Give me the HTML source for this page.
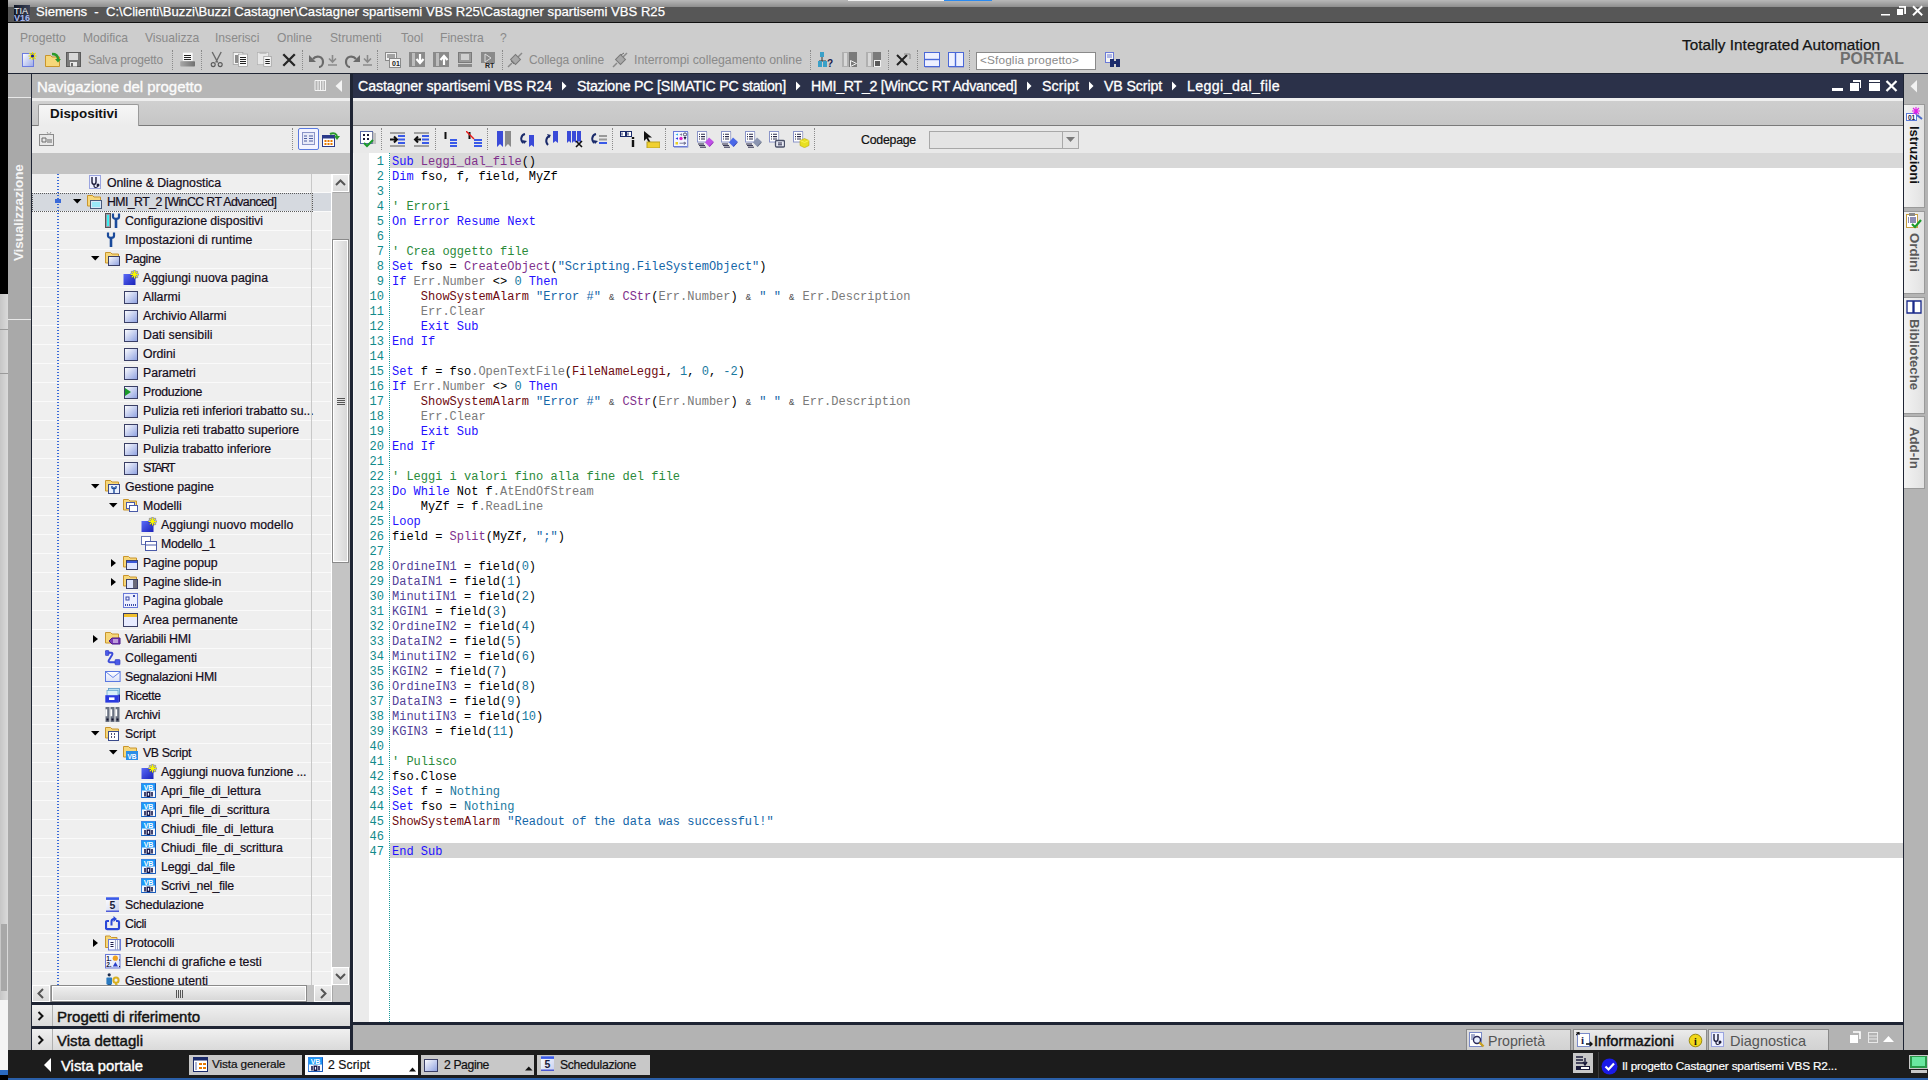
<!DOCTYPE html>
<html><head><meta charset="utf-8">
<style>
*{margin:0;padding:0;box-sizing:border-box}
html,body{width:1928px;height:1080px;overflow:hidden;background:#000;font-family:"Liberation Sans",sans-serif;font-size:12px;color:#000;position:relative}
.a{position:absolute}
.t{position:absolute;white-space:pre;line-height:1}
.cl{position:absolute;left:392px;height:15px;white-space:pre;font-family:"Liberation Mono",monospace;font-size:12px;line-height:15px;color:#000}
.ln{position:absolute;left:359px;width:25px;text-align:right;height:15px;font-family:"Liberation Mono",monospace;font-size:12px;line-height:15px;color:#118a8a}
.k{color:#2410ff}.p{color:#80308c}.c{color:#2a8a3a}.s{color:#1466a8}.g{color:#7a7a7a}.m{color:#6e0a10}.n{color:#1a7aa0}.v{color:#523f98}
.amp{display:inline-block;width:7.2px;text-align:center;font-size:9px;color:#444;vertical-align:top;line-height:16px}
.tr{position:absolute;font-size:12.3px;color:#140c1a;white-space:pre;line-height:1;-webkit-text-stroke:0.2px #140c1a}
</style></head><body>
<div class="a" style="left:0px;top:0px;width:8px;height:294px;background:#000;"></div>
<div class="a" style="left:0px;top:294px;width:8px;height:776px;background:linear-gradient(90deg,#c6c6c6,#dadada);"></div>
<div class="a" style="left:0px;top:329px;width:8px;height:1px;background:#9a9a9a;"></div>
<div class="a" style="left:0px;top:373px;width:8px;height:1px;background:#9a9a9a;"></div>
<div class="a" style="left:1px;top:924px;width:6px;height:67px;background:#a8a8a8;"></div>
<div class="a" style="left:0px;top:1000px;width:8px;height:70px;background:#f4f4f4;"></div>
<div class="a" style="left:0px;top:1070px;width:8px;height:5px;background:#2a6ac0;"></div>
<div class="a" style="left:0px;top:1075px;width:8px;height:5px;background:#000;"></div>
<div class="a" style="left:8px;top:0px;width:1920px;height:7px;background:linear-gradient(#b8b8b8,#8e8e8e);"></div>
<div class="a" style="left:848px;top:0px;width:96px;height:1px;background:#f2f2f2;"></div>
<div class="a" style="left:944px;top:0px;width:48px;height:1px;background:#2a8af0;"></div>
<div class="a" style="left:8px;top:7px;width:1920px;height:15px;background:#575757;"></div>
<div class="a" style="left:8px;top:22px;width:1920px;height:1px;background:#101010;"></div>
<svg class="a" style="left:14px;top:5px;" width="16" height="16" viewBox="0 0 16 16"><defs><linearGradient id="tl" x1="0" y1="0" x2="1" y2="0"><stop offset="0" stop-color="#121828"/><stop offset="1" stop-color="#3a4258"/></linearGradient></defs><rect width="16" height="16" fill="url(#tl)"/><text x="0" y="8.6" font-size="8.6" font-family="Liberation Sans" fill="#f4f4f4" textLength="14" lengthAdjust="spacingAndGlyphs">TIA</text><text x="0" y="15.9" font-size="8.4" font-weight="700" font-family="Liberation Sans" fill="#a8b8f0" textLength="16" lengthAdjust="spacingAndGlyphs">V16</text></svg>
<div class="t" style="left:36px;top:5px;font-size:13.1px;color:#fff;font-weight:400;font-family:'Liberation Sans',sans-serif;letter-spacing:0.009px;-webkit-text-stroke:0.25px #fff;">Siemens  -  C:\Clienti\Buzzi\Buzzi Castagner\Castagner spartisemi VBS R25\Castagner spartisemi VBS R25</div>
<svg class="a" style="left:1880px;top:4px;" width="48" height="14" viewBox="0 0 48 14"><rect x="1" y="10" width="9" height="1.5" fill="#fff"/><path d="M19 2.8h6.1v7.2" stroke="#fff" stroke-width="1.8" fill="none"/><rect x="16.5" y="4.5" width="7" height="7" fill="#fff" stroke="#575757"/><path d="M33 2.3l9.2 9M42.2 2.3l-9.2 9" stroke="#fff" stroke-width="1.9"/></svg>
<div class="a" style="left:8px;top:23px;width:1920px;height:50px;background:#cdcdcd;"></div>
<div class="a" style="left:8px;top:73px;width:1920px;height:1px;background:#1e2433;"></div>
<div class="t" style="left:20px;top:32px;font-size:12.1px;color:#8a8a8a;font-weight:400;font-family:'Liberation Sans',sans-serif;">Progetto</div>
<div class="t" style="left:83px;top:32px;font-size:12.1px;color:#8a8a8a;font-weight:400;font-family:'Liberation Sans',sans-serif;">Modifica</div>
<div class="t" style="left:145px;top:32px;font-size:12.1px;color:#8a8a8a;font-weight:400;font-family:'Liberation Sans',sans-serif;">Visualizza</div>
<div class="t" style="left:215px;top:32px;font-size:12.1px;color:#8a8a8a;font-weight:400;font-family:'Liberation Sans',sans-serif;">Inserisci</div>
<div class="t" style="left:277px;top:32px;font-size:12.1px;color:#8a8a8a;font-weight:400;font-family:'Liberation Sans',sans-serif;">Online</div>
<div class="t" style="left:330px;top:32px;font-size:12.1px;color:#8a8a8a;font-weight:400;font-family:'Liberation Sans',sans-serif;">Strumenti</div>
<div class="t" style="left:401px;top:32px;font-size:12.1px;color:#8a8a8a;font-weight:400;font-family:'Liberation Sans',sans-serif;">Tool</div>
<div class="t" style="left:440px;top:32px;font-size:12.1px;color:#8a8a8a;font-weight:400;font-family:'Liberation Sans',sans-serif;">Finestra</div>
<div class="t" style="left:500px;top:32px;font-size:12.1px;color:#8a8a8a;font-weight:400;font-family:'Liberation Sans',sans-serif;">?</div>
<svg class="a" style="left:22px;top:52px;" width="15" height="15" viewBox="0 0 15 15"><defs><linearGradient id="np" x1="0" y1="0" x2="1" y2="1"><stop offset="0" stop-color="#fff"/><stop offset="1" stop-color="#9aa8e8"/></linearGradient></defs><rect x="0.5" y="1.5" width="11" height="13" fill="url(#np)" stroke="#6b7be0"/><path d="M10.5 0v8M6.5 4h8M7.5 1l6 6M13.5 1l-6 6" stroke="#e8e000" stroke-width="1.2"/><circle cx="10.5" cy="4" r="1.6" fill="#1a1aa0"/></svg>
<svg class="a" style="left:45px;top:52px;" width="16" height="15" viewBox="0 0 16 15"><path d="M0.5 3.5h5l1.5 1.5h7.5v9.5h-14z" fill="#f6d77a" stroke="#c9952c"/><path d="M7 2c4 0 6 1.5 6 5" stroke="#2a9a2a" stroke-width="2.4" fill="none"/><path d="M10 7h6l-3 3.5z" fill="#2a9a2a"/></svg>
<svg class="a" style="left:66px;top:52px;" width="15" height="15" viewBox="0 0 15 15"><rect x="0.5" y="0.5" width="14" height="14" fill="#7a7a7a" stroke="#5a5a5a"/><rect x="3" y="1" width="9" height="7" fill="#d8d8d8"/><rect x="4" y="10" width="7" height="4.5" fill="#e8e8e8"/><rect x="5" y="11" width="2" height="3.5" fill="#6a6a6a"/></svg>
<div class="t" style="left:88px;top:54px;font-size:12px;color:#8a8a8a;font-weight:400;font-family:'Liberation Sans',sans-serif;letter-spacing:-0.171px;">Salva progetto</div>
<div class="a" style="left:172px;top:50px;width:1px;height:20px;border-left:1px dotted #8a8a8a"></div>
<svg class="a" style="left:180px;top:51px;" width="16" height="17" viewBox="0 0 16 17"><defs><linearGradient id="pr" x1="0" y1="0" x2="1" y2="0"><stop offset="0" stop-color="#a8a8a8"/><stop offset="1" stop-color="#707070"/></linearGradient></defs><rect x="2.5" y="1.2" width="10.5" height="9" fill="#f8f8f8" stroke="#c8c8c8" stroke-width="0.6"/><path d="M4 4.5h7M4 6.5h7M4 8.5h7" stroke="#222" stroke-width="1"/><rect x="0.2" y="10.2" width="14.8" height="5.4" rx="0.8" fill="url(#pr)"/></svg>
<div class="a" style="left:201px;top:50px;width:1px;height:20px;border-left:1px dotted #8a8a8a"></div>
<svg class="a" style="left:210px;top:51px;" width="14" height="17" viewBox="0 0 14 17"><path d="M2.2 1l5.5 10.5M11.2 1L5.7 11.5" stroke="#6a6a6a" stroke-width="1.4"/><circle cx="3.2" cy="13.6" r="2" fill="none" stroke="#5a5a5a" stroke-width="1.1"/><circle cx="10.2" cy="13.6" r="2" fill="none" stroke="#5a5a5a" stroke-width="1.1"/></svg>
<svg class="a" style="left:232px;top:51px;" width="17" height="17" viewBox="0 0 17 17"><rect x="1.2" y="1.5" width="9.7" height="11.9" fill="#f4f4f4" stroke="#9a9a9a" stroke-width="0.7"/><path d="M3 5h3M3 7h3M3 9h3M3 11h3" stroke="#222"/><rect x="6.4" y="3.1" width="9" height="12.5" fill="#f8f8f8" stroke="#9a9a9a" stroke-width="0.7"/><path d="M8 6.5h6M8 8.5h6M8 10.5h6M8 12.5h6" stroke="#222"/></svg>
<svg class="a" style="left:257px;top:51px;" width="16" height="17" viewBox="0 0 16 17"><rect x="0.3" y="1.5" width="11.3" height="12.2" fill="#e8e8e8" stroke="#b0b0b0" stroke-width="0.7"/><rect x="2.5" y="0.8" width="7" height="2" fill="#b8b8b8"/><rect x="6.8" y="5.4" width="7.4" height="10.2" fill="#f8f8f8" stroke="#9a9a9a" stroke-width="0.7"/><path d="M8.3 8.5h4.5M8.3 10.5h4.5M8.3 12.5h4.5" stroke="#222"/></svg>
<svg class="a" style="left:282px;top:53px;" width="14" height="14" viewBox="0 0 14 14"><path d="M1.3 1.3l11.5 11.5M12.8 1.3L1.3 12.8" stroke="#262626" stroke-width="2.3"/></svg>
<div class="a" style="left:302px;top:50px;width:1px;height:20px;border-left:1px dotted #8a8a8a"></div>
<svg class="a" style="left:309px;top:52px;" width="16" height="16" viewBox="0 0 16 16"><path d="M4 7c3-4 10-3 10 3c0 3-2 5-4 5" stroke="#6a6a6a" stroke-width="2.2" fill="none"/><path d="M0 3v7h7z" fill="#6a6a6a"/></svg>
<svg class="a" style="left:328px;top:55px;" width="9" height="11" viewBox="0 0 9 11"><path d="M4.5 0v6M1 3.5l3.5 3.5 3.5-3.5M0 10h9" stroke="#8a8a8a" stroke-width="1.6" fill="none"/></svg>
<svg class="a" style="left:344px;top:52px;" width="16" height="16" viewBox="0 0 16 16"><path d="M12 7c-3-4-10-3-10 3c0 3 2 5 4 5" stroke="#6a6a6a" stroke-width="2.2" fill="none"/><path d="M16 3v7H9z" fill="#6a6a6a"/></svg>
<svg class="a" style="left:363px;top:55px;" width="9" height="11" viewBox="0 0 9 11"><path d="M4.5 0v6M1 3.5l3.5 3.5 3.5-3.5M0 10h9" stroke="#8a8a8a" stroke-width="1.6" fill="none"/></svg>
<div class="a" style="left:377px;top:50px;width:1px;height:20px;border-left:1px dotted #8a8a8a"></div>
<svg class="a" style="left:385px;top:52px;" width="16" height="16" viewBox="0 0 16 16"><rect x="0.5" y="0.5" width="11" height="8" fill="#f0f0f0" stroke="#8a8a8a"/><path d="M2 3h8M2 5h8" stroke="#555"/><rect x="4.5" y="6.5" width="11" height="9" fill="#f4f4f4" stroke="#8a8a8a"/><text x="7" y="14" font-size="7" font-weight="700" font-family="Liberation Sans" fill="#222">01</text></svg>
<svg class="a" style="left:409px;top:52px;" width="16" height="16" viewBox="0 0 16 16"><rect x="0" y="0" width="16" height="15" fill="#8a8a8a"/><rect x="3" y="1" width="3" height="13" fill="#bdbdbd"/><path d="M11 2v8M7.5 7l3.5 4 3.5-4" stroke="#fff" stroke-width="2.2" fill="none"/></svg>
<svg class="a" style="left:433px;top:52px;" width="16" height="16" viewBox="0 0 16 16"><rect x="0" y="0" width="16" height="15" fill="#8a8a8a"/><rect x="3" y="1" width="3" height="13" fill="#bdbdbd"/><path d="M11 13V5M7.5 8l3.5-4 3.5 4" stroke="#fff" stroke-width="2.2" fill="none"/></svg>
<svg class="a" style="left:458px;top:52px;" width="14" height="16" viewBox="0 0 14 16"><rect x="0.5" y="0.5" width="13" height="10" fill="#9a9a9a" stroke="#7a7a7a"/><rect x="3" y="2" width="8" height="6" fill="#d0d0d0"/><rect x="0" y="12" width="14" height="3" fill="#8a8a8a"/></svg>
<svg class="a" style="left:481px;top:52px;" width="16" height="16" viewBox="0 0 16 16"><rect x="0" y="0" width="14" height="11" fill="#8a8a8a"/><path d="M4 2l6 4-6 4z" fill="none" stroke="#ddd"/><text x="4" y="15.5" font-size="7" font-weight="700" font-family="Liberation Sans" fill="#222">RT</text></svg>
<div class="a" style="left:502px;top:50px;width:1px;height:20px;border-left:1px dotted #8a8a8a"></div>
<svg class="a" style="left:507px;top:52px;" width="16" height="16" viewBox="0 0 16 16"><path d="M1 15l4-4M11 5l4-4" stroke="#8a8a8a" stroke-width="1.5"/><path d="M4 9l3-3 3 3-3 3z" fill="#9a9a9a" stroke="#7a7a7a"/><rect x="5" y="4" width="7" height="7" transform="rotate(45 8.5 7.5)" fill="#a8a8a8" stroke="#7a7a7a"/></svg>
<div class="t" style="left:529px;top:54px;font-size:12px;color:#8a8a8a;font-weight:400;font-family:'Liberation Sans',sans-serif;letter-spacing:-0.076px;">Collega online</div>
<svg class="a" style="left:612px;top:52px;" width="16" height="16" viewBox="0 0 16 16"><path d="M1 15l4-4M11 5l4-4" stroke="#8a8a8a" stroke-width="1.5"/><rect x="5" y="4" width="7" height="7" transform="rotate(45 8.5 7.5)" fill="#a8a8a8" stroke="#7a7a7a"/><path d="M9 3l3-2" stroke="#6a6a6a"/></svg>
<div class="t" style="left:634px;top:54px;font-size:12.3px;color:#8a8a8a;font-weight:400;font-family:'Liberation Sans',sans-serif;letter-spacing:-0.005px;">Interrompi collegamento online</div>
<div class="a" style="left:810px;top:50px;width:1px;height:20px;border-left:1px dotted #8a8a8a"></div>
<svg class="a" style="left:818px;top:52px;" width="16" height="16" viewBox="0 0 16 16"><rect x="2" y="0" width="4" height="5" fill="#3aa0c8"/><path d="M4 5v4M1 9h7" stroke="#333"/><rect x="0" y="9" width="4" height="6" fill="#3aa0c8"/><rect x="5" y="9" width="4" height="6" fill="#3aa0c8"/><text x="9" y="15" font-size="10" font-weight="700" font-family="Liberation Sans" fill="#1a1a4a">?</text></svg>
<svg class="a" style="left:842px;top:52px;" width="16" height="16" viewBox="0 0 16 16"><rect x="0" y="0" width="7" height="15" fill="#b0b0b0"/><rect x="2" y="1" width="3" height="13" fill="#d8d8d8"/><rect x="7" y="0" width="8" height="15" fill="#7a7a7a"/><path d="M8.5 8.5l6 3-6 3z" fill="none" stroke="#f0f0f0"/></svg>
<svg class="a" style="left:866px;top:52px;" width="16" height="16" viewBox="0 0 16 16"><rect x="0" y="0" width="7" height="15" fill="#b0b0b0"/><rect x="2" y="1" width="3" height="13" fill="#d8d8d8"/><rect x="7" y="0" width="8" height="15" fill="#7a7a7a"/><rect x="8.5" y="8.5" width="6" height="6" fill="#5a5a5a" stroke="#f0f0f0"/></svg>
<div class="a" style="left:888px;top:50px;width:1px;height:20px;border-left:1px dotted #8a8a8a"></div>
<svg class="a" style="left:895px;top:52px;" width="16" height="15" viewBox="0 0 16 15"><path d="M2 3l10 10M12 3L2 13" stroke="#222" stroke-width="2"/><path d="M9 2h6v5" stroke="#8a8a8a" fill="none"/></svg>
<div class="a" style="left:917px;top:50px;width:1px;height:20px;border-left:1px dotted #8a8a8a"></div>
<svg class="a" style="left:924px;top:52px;" width="16" height="16" viewBox="0 0 16 16"><rect x="0.5" y="0.5" width="15" height="14" fill="#eef0ff" stroke="#4a68d8"/><path d="M1 7.5h14" stroke="#4a68d8" stroke-width="1.4"/><path d="M1 15.5h15" stroke="#a8a8c8"/></svg>
<svg class="a" style="left:948px;top:52px;" width="16" height="16" viewBox="0 0 16 16"><rect x="0.5" y="0.5" width="15" height="14" fill="#eef0ff" stroke="#4a68d8"/><path d="M7.5 1v14" stroke="#4a68d8" stroke-width="1.4"/><path d="M1 15.5h15" stroke="#a8a8c8"/></svg>
<div class="a" style="left:969px;top:50px;width:1px;height:20px;border-left:1px dotted #8a8a8a"></div>
<div class="a" style="left:976px;top:52px;width:120px;height:18px;background:#fff;border:1px solid #8a8a8a"></div>
<div class="t" style="left:980px;top:55px;font-size:11.8px;color:#8a8a8a;font-weight:400;font-family:'Liberation Sans',sans-serif;letter-spacing:0.143px;">&lt;Sfoglia progetto&gt;</div>
<svg class="a" style="left:1105px;top:52px;" width="16" height="16" viewBox="0 0 16 16"><rect x="0.5" y="0.5" width="8" height="10" fill="#f4f4f4" stroke="#6a7ad8"/><path d="M2 3h5M2 5h5" stroke="#6a7ad8"/><rect x="5" y="7" width="4" height="8" fill="#1a2a6a"/><rect x="11" y="7" width="4" height="8" fill="#1a2a6a"/><rect x="8" y="9" width="4" height="3" fill="#1a2a6a"/></svg>
<div class="t" style="left:1682px;top:37px;font-size:15.3px;color:#141414;font-weight:400;font-family:'Liberation Sans',sans-serif;letter-spacing:0.024px;-webkit-text-stroke:0.25px #141414;">Totally Integrated Automation</div>
<div class="t" style="left:1840px;top:51px;font-size:15.8px;color:#6e6e6e;font-weight:700;font-family:'Liberation Sans',sans-serif;letter-spacing:0.036px;">PORTAL</div>
<div class="a" style="left:8px;top:74px;width:23px;height:976px;background:#a9a9a9;"></div>
<div class="a" style="left:8px;top:74px;width:23px;height:24px;background:#b2b2b2;"></div>
<div class="a" style="left:8px;top:97px;width:23px;height:1px;background:#e8e8e8;"></div>
<div class="a" style="left:8px;top:319px;width:23px;height:1px;background:#e8e8e8;"></div>
<div class="t" style="left:12px;top:261px;font-size:13.5px;font-weight:700;color:#f4f4f4;transform-origin:0 0;transform:rotate(-90deg);letter-spacing:-0.140px;">Visualizzazione</div>
<div class="a" style="left:31px;top:74px;width:1px;height:976px;background:#1e2433;"></div>
<div class="a" style="left:32px;top:74px;width:318px;height:24px;background:#b6b6b6;"></div>
<div class="t" style="left:37px;top:79px;font-size:15px;color:#fbfbfb;font-weight:400;font-family:'Liberation Sans',sans-serif;letter-spacing:-0.040px;-webkit-text-stroke:0.35px #fbfbfb;">Navigazione del progetto</div>
<svg class="a" style="left:314px;top:80px;" width="13" height="11" viewBox="0 0 13 11"><path d="M1 0.5v10M1 0.5h11M1 10.5h11M4 1v10M6.5 1v10M9 1v10M11.5 1v10" stroke="#f4f4f4" fill="none"/></svg>
<svg class="a" style="left:335px;top:80px;" width="8" height="12" viewBox="0 0 8 12"><path d="M7 0v12L0.5 6z" fill="#f4f4f4"/></svg>
<div class="a" style="left:32px;top:98px;width:318px;height:3px;background:#eeeeee;"></div>
<div class="a" style="left:32px;top:101px;width:318px;height:24px;background:linear-gradient(#d0d0d0,#c6c6c6);"></div>
<div class="a" style="left:32px;top:125px;width:318px;height:1px;background:#7a7a7a;"></div>
<div class="a" style="left:38px;top:104px;width:101px;height:22px;background:linear-gradient(#f6f6f6,#ececec);border:1px solid #9a9a9a;border-bottom:none;border-radius:2px 2px 0 0"></div>
<div class="t" style="left:50px;top:107px;font-size:13.4px;color:#111;font-weight:700;font-family:'Liberation Sans',sans-serif;">Dispositivi</div>
<div class="a" style="left:32px;top:126px;width:318px;height:27px;background:#ececec;"></div>
<svg class="a" style="left:39px;top:131px;" width="16" height="16" viewBox="0 0 16 16"><rect x="0.5" y="3.5" width="14" height="11" fill="#e8e8e8" stroke="#8a8a8a"/><path d="M3 7h4v4H3zM8 9h5M8 11h5" stroke="#6a6a6a" fill="none"/><path d="M8 1l2 3 2-3" stroke="#9a9a9a" fill="none"/></svg>
<div class="a" style="left:292px;top:128px;width:1px;height:22px;border-left:1px dotted #8a8a8a"></div>
<div class="a" style="left:298px;top:128px;width:21px;height:22px;background:#f4f4ff;border:1px solid #5a7ae0;border-radius:2px"></div>
<svg class="a" style="left:302px;top:132px;" width="13" height="14" viewBox="0 0 13 14"><rect x="0.5" y="0.5" width="12" height="12" fill="#e8eaf8" stroke="#8a94c8"/><path d="M2 4h3M7 4h4M2 6.5h3M7 6.5h4M2 9h3M7 9h4" stroke="#4a5aa0"/></svg>
<svg class="a" style="left:322px;top:131px;" width="18" height="16" viewBox="0 0 18 16"><rect x="0.5" y="4.5" width="12" height="11" fill="#fff" stroke="#2a3a8a"/><rect x="0.5" y="4.5" width="12" height="3" fill="#2a3a8a"/><path d="M2.5 9h2v2h-2zM5.5 9h2v2h-2zM8.5 9h2v2h-2zM2.5 12h2v2h-2zM5.5 12h2v2h-2zM8.5 12h2v2h-2z" fill="#e87a00"/><path d="M8 3c4-2 7 0 7 3" stroke="#2a9a2a" stroke-width="2" fill="none"/><path d="M12 5h6l-3 4z" fill="#2a9a2a"/></svg>
<div class="a" style="left:32px;top:153px;width:318px;height:21px;background:#c3c3c3;"></div>
<div class="a" style="left:32px;top:174px;width:300px;height:811px;background:#efefef;"></div>
<div class="a" style="left:332px;top:174px;width:18px;height:811px;background:#c4c4c4;"></div>
<div class="a" style="left:32px;top:192px;width:300px;height:1px;background:#fafafa;"></div>
<svg class="a" style="left:89px;top:175px;" width="13" height="15" viewBox="0 0 13 15"><rect x="0.5" y="0.5" width="11" height="13" fill="#eef0ff" stroke="#9aa4e0"/><path d="M3 2v5c0 3 4 3 4 0V2" stroke="#1a1a3a" stroke-width="1.4" fill="none"/><path d="M5 9v2c0 2 3 2 4 0" stroke="#1a1a3a" stroke-width="1.2" fill="none"/><circle cx="9" cy="10" r="1.5" fill="#1a1a3a"/></svg>
<div class="tr" style="left:107px;top:177px;letter-spacing:-0.042px;">Online &amp; Diagnostica</div>
<div class="a" style="left:32px;top:193px;width:299px;height:19px;background:#d5d9df;"></div>
<div class="a" style="left:311px;top:193px;width:20px;height:18px;background:#d5d9df;"></div>
<div class="a" style="left:32px;top:211px;width:300px;height:1px;background:#fafafa;"></div>
<div class="a" style="left:32px;top:193px;width:281px;height:19px;border:1px dotted #5a5a5a"></div>
<div class="a" style="left:55px;top:199px;width:6px;height:4px;background:#3a6ad8;"></div>
<svg class="a" style="left:73px;top:199px;" width="9" height="6" viewBox="0 0 9 6"><path d="M0 0h8.5L4.25 4.6z" fill="#000"/></svg>
<svg class="a" style="left:87px;top:194px;" width="16" height="16" viewBox="0 0 16 16"><path d="M0.5 1.5h5l1.5 1.5h6.5v9h-13z" fill="#f6d77a" stroke="#c9952c"/><rect x="3.5" y="6.5" width="11" height="8" fill="#d8e8f8" stroke="#4a5a7a"/><rect x="5" y="8" width="8" height="5" fill="#9ae8f8"/></svg>
<div class="tr" style="left:107px;top:196px;letter-spacing:-0.565px;">HMI_RT_2 [WinCC RT Advanced]</div>
<div class="a" style="left:32px;top:230px;width:300px;height:1px;background:#fafafa;"></div>
<svg class="a" style="left:105px;top:213px;" width="16" height="16" viewBox="0 0 16 16"><rect x="0.5" y="0.5" width="5" height="14" fill="#9a9aa8" stroke="#555"/><rect x="2" y="2" width="2" height="11" fill="#3af0f0"/><path d="M11 6v9" stroke="#1a4a9a" stroke-width="2.6"/><path d="M8 0.5v3.5c0 2.5 6 2.5 6 0V0.5" stroke="#1a4a9a" stroke-width="2.2" fill="none"/></svg>
<div class="tr" style="left:125px;top:215px;letter-spacing:-0.056px;">Configurazione dispositivi</div>
<div class="a" style="left:32px;top:249px;width:300px;height:1px;background:#fafafa;"></div>
<svg class="a" style="left:105px;top:232px;" width="16" height="16" viewBox="0 0 16 16"><path d="M6 6v9" stroke="#1a4a9a" stroke-width="2.6"/><path d="M3 0.5v3.5c0 2.5 6 2.5 6 0V0.5" stroke="#1a4a9a" stroke-width="2.2" fill="none"/></svg>
<div class="tr" style="left:125px;top:234px;letter-spacing:0.046px;">Impostazioni di runtime</div>
<div class="a" style="left:32px;top:268px;width:300px;height:1px;background:#fafafa;"></div>
<svg class="a" style="left:91px;top:256px;" width="9" height="6" viewBox="0 0 9 6"><path d="M0 0h8.5L4.25 4.6z" fill="#000"/></svg>
<svg class="a" style="left:105px;top:251px;" width="16" height="16" viewBox="0 0 16 16"><path d="M0.5 1.5h5l1.5 1.5h6.5v9h-13z" fill="#f6d77a" stroke="#c9952c"/><defs><linearGradient id="fp" x1="0" y1="0" x2="1" y2="1"><stop offset="0" stop-color="#fff"/><stop offset="1" stop-color="#8c9fe0"/></linearGradient></defs><rect x="3.5" y="5.5" width="11" height="9" fill="url(#fp)" stroke="#3a3f66"/></svg>
<div class="tr" style="left:125px;top:253px;letter-spacing:-0.433px;">Pagine</div>
<div class="a" style="left:32px;top:287px;width:300px;height:1px;background:#fafafa;"></div>
<svg class="a" style="left:123px;top:270px;" width="16" height="16" viewBox="0 0 16 16"><defs><linearGradient id="ad" x1="0" y1="0" x2="1" y2="1"><stop offset="0" stop-color="#5a6af8"/><stop offset="1" stop-color="#1a22b8"/></linearGradient></defs><rect x="0.5" y="4" width="12" height="11" fill="url(#ad)"/><path d="M11.5 0v9M7 4.5h9M8.3 1.3l6.4 6.4M14.7 1.3l-6.4 6.4" stroke="#20208a" stroke-width="2.2" stroke-opacity="0.55"/><path d="M11.5 0.5v8M7.5 4.5h8M8.7 1.7l5.6 5.6M14.3 1.7l-5.6 5.6" stroke="#f8f800" stroke-width="1.2"/></svg>
<div class="tr" style="left:143px;top:272px;letter-spacing:-0.006px;">Aggiungi nuova pagina</div>
<div class="a" style="left:32px;top:306px;width:300px;height:1px;background:#fafafa;"></div>
<svg class="a" style="left:123px;top:289px;" width="16" height="16" viewBox="0 0 16 16"><defs><linearGradient id="pg" x1="0" y1="0" x2="1" y2="1"><stop offset="0" stop-color="#fff"/><stop offset="1" stop-color="#8c9fe0"/></linearGradient></defs><rect x="1.5" y="2.5" width="13" height="12" fill="url(#pg)" stroke="#3a3f66"/></svg>
<div class="tr" style="left:143px;top:291px;letter-spacing:-0.025px;">Allarmi</div>
<div class="a" style="left:32px;top:325px;width:300px;height:1px;background:#fafafa;"></div>
<svg class="a" style="left:123px;top:308px;" width="16" height="16" viewBox="0 0 16 16"><defs><linearGradient id="pg" x1="0" y1="0" x2="1" y2="1"><stop offset="0" stop-color="#fff"/><stop offset="1" stop-color="#8c9fe0"/></linearGradient></defs><rect x="1.5" y="2.5" width="13" height="12" fill="url(#pg)" stroke="#3a3f66"/></svg>
<div class="tr" style="left:143px;top:310px;letter-spacing:-0.035px;">Archivio Allarmi</div>
<div class="a" style="left:32px;top:344px;width:300px;height:1px;background:#fafafa;"></div>
<svg class="a" style="left:123px;top:327px;" width="16" height="16" viewBox="0 0 16 16"><defs><linearGradient id="pg" x1="0" y1="0" x2="1" y2="1"><stop offset="0" stop-color="#fff"/><stop offset="1" stop-color="#8c9fe0"/></linearGradient></defs><rect x="1.5" y="2.5" width="13" height="12" fill="url(#pg)" stroke="#3a3f66"/></svg>
<div class="tr" style="left:143px;top:329px;letter-spacing:0.033px;">Dati sensibili</div>
<div class="a" style="left:32px;top:363px;width:300px;height:1px;background:#fafafa;"></div>
<svg class="a" style="left:123px;top:346px;" width="16" height="16" viewBox="0 0 16 16"><defs><linearGradient id="pg" x1="0" y1="0" x2="1" y2="1"><stop offset="0" stop-color="#fff"/><stop offset="1" stop-color="#8c9fe0"/></linearGradient></defs><rect x="1.5" y="2.5" width="13" height="12" fill="url(#pg)" stroke="#3a3f66"/></svg>
<div class="tr" style="left:143px;top:348px;letter-spacing:-0.052px;">Ordini</div>
<div class="a" style="left:32px;top:382px;width:300px;height:1px;background:#fafafa;"></div>
<svg class="a" style="left:123px;top:365px;" width="16" height="16" viewBox="0 0 16 16"><defs><linearGradient id="pg" x1="0" y1="0" x2="1" y2="1"><stop offset="0" stop-color="#fff"/><stop offset="1" stop-color="#8c9fe0"/></linearGradient></defs><rect x="1.5" y="2.5" width="13" height="12" fill="url(#pg)" stroke="#3a3f66"/></svg>
<div class="tr" style="left:143px;top:367px;letter-spacing:-0.068px;">Parametri</div>
<div class="a" style="left:32px;top:401px;width:300px;height:1px;background:#fafafa;"></div>
<svg class="a" style="left:123px;top:384px;" width="16" height="16" viewBox="0 0 16 16"><defs><linearGradient id="pg" x1="0" y1="0" x2="1" y2="1"><stop offset="0" stop-color="#fff"/><stop offset="1" stop-color="#8c9fe0"/></linearGradient></defs><rect x="1.5" y="2.5" width="13" height="12" fill="url(#pg)" stroke="#3a3f66"/><path d="M2 4l6 4-6 4z" fill="#1a9a2a"/></svg>
<div class="tr" style="left:143px;top:386px;letter-spacing:-0.322px;">Produzione</div>
<div class="a" style="left:32px;top:420px;width:300px;height:1px;background:#fafafa;"></div>
<svg class="a" style="left:123px;top:403px;" width="16" height="16" viewBox="0 0 16 16"><defs><linearGradient id="pg" x1="0" y1="0" x2="1" y2="1"><stop offset="0" stop-color="#fff"/><stop offset="1" stop-color="#8c9fe0"/></linearGradient></defs><rect x="1.5" y="2.5" width="13" height="12" fill="url(#pg)" stroke="#3a3f66"/></svg>
<div class="tr" style="left:143px;top:405px;letter-spacing:-0.044px;">Pulizia reti inferiori trabatto su...</div>
<div class="a" style="left:32px;top:439px;width:300px;height:1px;background:#fafafa;"></div>
<svg class="a" style="left:123px;top:422px;" width="16" height="16" viewBox="0 0 16 16"><defs><linearGradient id="pg" x1="0" y1="0" x2="1" y2="1"><stop offset="0" stop-color="#fff"/><stop offset="1" stop-color="#8c9fe0"/></linearGradient></defs><rect x="1.5" y="2.5" width="13" height="12" fill="url(#pg)" stroke="#3a3f66"/></svg>
<div class="tr" style="left:143px;top:424px;letter-spacing:-0.011px;">Pulizia reti trabatto superiore</div>
<div class="a" style="left:32px;top:458px;width:300px;height:1px;background:#fafafa;"></div>
<svg class="a" style="left:123px;top:441px;" width="16" height="16" viewBox="0 0 16 16"><defs><linearGradient id="pg" x1="0" y1="0" x2="1" y2="1"><stop offset="0" stop-color="#fff"/><stop offset="1" stop-color="#8c9fe0"/></linearGradient></defs><rect x="1.5" y="2.5" width="13" height="12" fill="url(#pg)" stroke="#3a3f66"/></svg>
<div class="tr" style="left:143px;top:443px;letter-spacing:-0.046px;">Pulizia trabatto inferiore</div>
<div class="a" style="left:32px;top:477px;width:300px;height:1px;background:#fafafa;"></div>
<svg class="a" style="left:123px;top:460px;" width="16" height="16" viewBox="0 0 16 16"><defs><linearGradient id="pg" x1="0" y1="0" x2="1" y2="1"><stop offset="0" stop-color="#fff"/><stop offset="1" stop-color="#8c9fe0"/></linearGradient></defs><rect x="1.5" y="2.5" width="13" height="12" fill="url(#pg)" stroke="#3a3f66"/></svg>
<div class="tr" style="left:143px;top:462px;letter-spacing:-1.677px;">START</div>
<div class="a" style="left:32px;top:496px;width:300px;height:1px;background:#fafafa;"></div>
<svg class="a" style="left:91px;top:484px;" width="9" height="6" viewBox="0 0 9 6"><path d="M0 0h8.5L4.25 4.6z" fill="#000"/></svg>
<svg class="a" style="left:105px;top:479px;" width="16" height="16" viewBox="0 0 16 16"><path d="M0.5 1.5h5l1.5 1.5h6.5v9h-13z" fill="#f6d77a" stroke="#c9952c"/><rect x="3.5" y="5.5" width="11" height="9" fill="#e8f0ff" stroke="#3a4a8a"/><path d="M9 8v6M7 7v2c0 1 4 1 4 0V7" stroke="#1a4a9a" stroke-width="1.4" fill="none"/></svg>
<div class="tr" style="left:125px;top:481px;letter-spacing:-0.051px;">Gestione pagine</div>
<div class="a" style="left:32px;top:515px;width:300px;height:1px;background:#fafafa;"></div>
<svg class="a" style="left:109px;top:503px;" width="9" height="6" viewBox="0 0 9 6"><path d="M0 0h8.5L4.25 4.6z" fill="#000"/></svg>
<svg class="a" style="left:123px;top:498px;" width="16" height="16" viewBox="0 0 16 16"><path d="M0.5 1.5h5l1.5 1.5h6.5v9h-13z" fill="#f6d77a" stroke="#c9952c"/><rect x="3.5" y="4.5" width="8" height="6" fill="#fff" stroke="#4a5aa8"/><rect x="6.5" y="7.5" width="8" height="6" fill="#fff" stroke="#4a5aa8"/></svg>
<div class="tr" style="left:143px;top:500px;letter-spacing:-0.038px;">Modelli</div>
<div class="a" style="left:32px;top:534px;width:300px;height:1px;background:#fafafa;"></div>
<svg class="a" style="left:141px;top:517px;" width="16" height="16" viewBox="0 0 16 16"><defs><linearGradient id="ad" x1="0" y1="0" x2="1" y2="1"><stop offset="0" stop-color="#5a6af8"/><stop offset="1" stop-color="#1a22b8"/></linearGradient></defs><rect x="0.5" y="4" width="12" height="11" fill="url(#ad)"/><path d="M11.5 0v9M7 4.5h9M8.3 1.3l6.4 6.4M14.7 1.3l-6.4 6.4" stroke="#20208a" stroke-width="2.2" stroke-opacity="0.55"/><path d="M11.5 0.5v8M7.5 4.5h8M8.7 1.7l5.6 5.6M14.3 1.7l-5.6 5.6" stroke="#f8f800" stroke-width="1.2"/></svg>
<div class="tr" style="left:161px;top:519px;letter-spacing:0.047px;">Aggiungi nuovo modello</div>
<div class="a" style="left:32px;top:553px;width:300px;height:1px;background:#fafafa;"></div>
<svg class="a" style="left:141px;top:536px;" width="16" height="16" viewBox="0 0 16 16"><rect x="0.5" y="0.5" width="9" height="8" fill="#fff" stroke="#6a7ab8"/><rect x="4.5" y="5.5" width="11" height="9" fill="#fff" stroke="#4a5aa8"/><path d="M5 9h10" stroke="#4a5aa8"/></svg>
<div class="tr" style="left:161px;top:538px;letter-spacing:-0.272px;">Modello_1</div>
<div class="a" style="left:32px;top:572px;width:300px;height:1px;background:#fafafa;"></div>
<svg class="a" style="left:111px;top:559px;" width="6" height="9" viewBox="0 0 6 9"><path d="M0 0v8l5-4z" fill="#000"/></svg>
<svg class="a" style="left:123px;top:555px;" width="16" height="16" viewBox="0 0 16 16"><path d="M0.5 1.5h5l1.5 1.5h6.5v9h-13z" fill="#f6d77a" stroke="#c9952c"/><rect x="3.5" y="5.5" width="11" height="9" fill="#dfe6ff" stroke="#3a3f66"/><rect x="4" y="6" width="10" height="2" fill="#3a58d8"/></svg>
<div class="tr" style="left:143px;top:557px;letter-spacing:-0.126px;">Pagine popup</div>
<div class="a" style="left:32px;top:591px;width:300px;height:1px;background:#fafafa;"></div>
<svg class="a" style="left:111px;top:578px;" width="6" height="9" viewBox="0 0 6 9"><path d="M0 0v8l5-4z" fill="#000"/></svg>
<svg class="a" style="left:123px;top:574px;" width="16" height="16" viewBox="0 0 16 16"><path d="M0.5 1.5h5l1.5 1.5h6.5v9h-13z" fill="#f6d77a" stroke="#c9952c"/><rect x="3.5" y="5.5" width="11" height="9" fill="#dfe6ff" stroke="#3a3f66"/><rect x="10" y="6" width="4" height="8" fill="#6a6a7a"/></svg>
<div class="tr" style="left:143px;top:576px;letter-spacing:-0.158px;">Pagine slide-in</div>
<div class="a" style="left:32px;top:610px;width:300px;height:1px;background:#fafafa;"></div>
<svg class="a" style="left:123px;top:593px;" width="16" height="16" viewBox="0 0 16 16"><rect x="0.5" y="0.5" width="14" height="14" fill="#eef0ff" stroke="#6a7ad8"/><rect x="3" y="4" width="3" height="3" fill="none" stroke="#3a4aa8"/><rect x="10" y="2" width="2" height="2" fill="#3a4aa8"/><path d="M2 12h11" stroke="#3a4aa8" stroke-dasharray="1 1" stroke-width="2"/></svg>
<div class="tr" style="left:143px;top:595px;letter-spacing:-0.098px;">Pagina globale</div>
<div class="a" style="left:32px;top:629px;width:300px;height:1px;background:#fafafa;"></div>
<svg class="a" style="left:123px;top:612px;" width="16" height="16" viewBox="0 0 16 16"><rect x="0.5" y="1.5" width="14" height="13" fill="#e8ecff" stroke="#3a3f66"/><rect x="1" y="2" width="13" height="3" fill="#f0c030"/></svg>
<div class="tr" style="left:143px;top:614px;letter-spacing:-0.009px;">Area permanente</div>
<div class="a" style="left:32px;top:648px;width:300px;height:1px;background:#fafafa;"></div>
<svg class="a" style="left:93px;top:635px;" width="6" height="9" viewBox="0 0 6 9"><path d="M0 0v8l5-4z" fill="#000"/></svg>
<svg class="a" style="left:105px;top:631px;" width="16" height="16" viewBox="0 0 16 16"><path d="M0.5 1.5h5l1.5 1.5h6.5v9h-13z" fill="#f6d77a" stroke="#c9952c"/><path d="M4 10l3-3h8v6H7z" fill="#7a3ab8" stroke="#4a1a88"/><path d="M8 9h5M8 11h5" stroke="#fff"/></svg>
<div class="tr" style="left:125px;top:633px;letter-spacing:-0.215px;">Variabili HMI</div>
<div class="a" style="left:32px;top:667px;width:300px;height:1px;background:#fafafa;"></div>
<svg class="a" style="left:105px;top:650px;" width="16" height="16" viewBox="0 0 16 16"><path d="M3 2.8h3.2c1.2 0 1.6 1 1 2L3.8 10.3c-0.6 1-0.2 1.9 1 1.9H11" stroke="#3a4ad8" stroke-width="1.9" fill="none"/><rect x="0.3" y="0.5" width="3.6" height="5" rx="0.8" fill="#4a5ae8" stroke="#2a32b8" stroke-width="0.6"/><rect x="10" y="9.6" width="5" height="5.2" rx="0.8" fill="#4a5ae8" stroke="#2a32b8" stroke-width="0.6"/></svg>
<div class="tr" style="left:125px;top:652px;letter-spacing:0.027px;">Collegamenti</div>
<div class="a" style="left:32px;top:686px;width:300px;height:1px;background:#fafafa;"></div>
<svg class="a" style="left:105px;top:670px;" width="16" height="16" viewBox="0 0 16 16"><defs><linearGradient id="ml" x1="0" y1="0" x2="0" y2="1"><stop offset="0" stop-color="#fff"/><stop offset="1" stop-color="#d8dff8"/></linearGradient></defs><rect x="0.5" y="1.5" width="14.6" height="10" fill="url(#ml)" stroke="#5a78e0"/><path d="M1 2l7 5.5L15 2" stroke="#6a88e8" fill="none"/></svg>
<div class="tr" style="left:125px;top:671px;letter-spacing:-0.274px;">Segnalazioni HMI</div>
<div class="a" style="left:32px;top:705px;width:300px;height:1px;background:#fafafa;"></div>
<svg class="a" style="left:105px;top:688px;" width="16" height="16" viewBox="0 0 16 16"><rect x="3.5" y="0.5" width="11" height="6" fill="#b8e0f0" stroke="#5a9ac8" stroke-width="0.8"/><rect x="2" y="2.5" width="11" height="6" fill="#d8f0f8" stroke="#6aa8d0" stroke-width="0.8"/><rect x="0.3" y="7.2" width="13.5" height="7.4" fill="#2a3ae0"/><path d="M13.8 7.2l1.2-1.2v7.4l-1.2 1.2z" fill="#1a20a0"/><rect x="4" y="9.4" width="5.5" height="2.6" fill="#fff"/></svg>
<div class="tr" style="left:125px;top:690px;letter-spacing:-0.369px;">Ricette</div>
<div class="a" style="left:32px;top:724px;width:300px;height:1px;background:#fafafa;"></div>
<svg class="a" style="left:105px;top:707px;" width="16" height="16" viewBox="0 0 16 16"><rect x="0.5" y="0" width="4" height="15" rx="0.6" fill="#6a7282"/><rect x="5.5" y="0" width="4" height="15" rx="0.6" fill="#6a7282"/><rect x="10.5" y="0" width="4" height="15" rx="0.6" fill="#6a7282"/><path d="M1.3 2.2v7M6.3 2.2v7M11.3 2.2v7" stroke="#fff" stroke-width="1.8"/><path d="M1.5 12.5h2M6.5 12.5h2M11.5 12.5h2" stroke="#10102a" stroke-width="2"/></svg>
<div class="tr" style="left:125px;top:709px;letter-spacing:-0.244px;">Archivi</div>
<div class="a" style="left:32px;top:743px;width:300px;height:1px;background:#fafafa;"></div>
<svg class="a" style="left:91px;top:731px;" width="9" height="6" viewBox="0 0 9 6"><path d="M0 0h8.5L4.25 4.6z" fill="#000"/></svg>
<svg class="a" style="left:105px;top:726px;" width="16" height="16" viewBox="0 0 16 16"><path d="M0.5 1.5h5l1.5 1.5h6.5v9h-13z" fill="#f6d77a" stroke="#c9952c"/><rect x="3.5" y="5.5" width="10" height="9" fill="#fff" stroke="#3a4a8a"/><path d="M6 8h1M9 8h1M6 11h1M9 11h1" stroke="#1a1a4a" stroke-width="1.6"/></svg>
<div class="tr" style="left:125px;top:728px;letter-spacing:-0.173px;">Script</div>
<div class="a" style="left:32px;top:762px;width:300px;height:1px;background:#fafafa;"></div>
<svg class="a" style="left:109px;top:750px;" width="9" height="6" viewBox="0 0 9 6"><path d="M0 0h8.5L4.25 4.6z" fill="#000"/></svg>
<svg class="a" style="left:123px;top:745px;" width="16" height="16" viewBox="0 0 16 16"><path d="M0.5 1.5h5l1.5 1.5h6.5v9h-13z" fill="#f6d77a" stroke="#c9952c"/><rect x="3" y="6" width="12" height="9" fill="#2a8ee8"/><text x="9" y="13.5" font-size="6.5" font-weight="700" font-family="Liberation Sans" fill="#fff" text-anchor="middle">VB</text></svg>
<div class="tr" style="left:143px;top:747px;letter-spacing:-0.363px;">VB Script</div>
<div class="a" style="left:32px;top:781px;width:300px;height:1px;background:#fafafa;"></div>
<svg class="a" style="left:141px;top:764px;" width="16" height="16" viewBox="0 0 16 16"><defs><linearGradient id="ad" x1="0" y1="0" x2="1" y2="1"><stop offset="0" stop-color="#5a6af8"/><stop offset="1" stop-color="#1a22b8"/></linearGradient></defs><rect x="0.5" y="4" width="12" height="11" fill="url(#ad)"/><path d="M11.5 0v9M7 4.5h9M8.3 1.3l6.4 6.4M14.7 1.3l-6.4 6.4" stroke="#20208a" stroke-width="2.2" stroke-opacity="0.55"/><path d="M11.5 0.5v8M7.5 4.5h8M8.7 1.7l5.6 5.6M14.3 1.7l-5.6 5.6" stroke="#f8f800" stroke-width="1.2"/></svg>
<div class="tr" style="left:161px;top:766px;letter-spacing:-0.110px;">Aggiungi nuova funzione ...</div>
<div class="a" style="left:32px;top:800px;width:300px;height:1px;background:#fafafa;"></div>
<svg class="a" style="left:141px;top:783px;" width="16" height="16" viewBox="0 0 16 16"><rect x="0.5" y="0.5" width="14" height="14" fill="#f4f8ff" stroke="#3a8ae8"/><rect x="1" y="1" width="13" height="6.5" fill="#1a9af8"/><text x="7.5" y="7" font-size="7" font-family="Liberation Sans" font-weight="700" fill="#fff" text-anchor="middle">VB</text><path d="M4 9v4.5M11 9v4.5" stroke="#0a0a40" stroke-width="1.5"/><rect x="6.2" y="9.2" width="2.6" height="4.1" fill="none" stroke="#0a0a40" stroke-width="1.3"/><path d="M0.5 14.5h14v-14" stroke="#1a5ab8" fill="none"/></svg>
<div class="tr" style="left:161px;top:785px;letter-spacing:-0.108px;">Apri_file_di_lettura</div>
<div class="a" style="left:32px;top:819px;width:300px;height:1px;background:#fafafa;"></div>
<svg class="a" style="left:141px;top:802px;" width="16" height="16" viewBox="0 0 16 16"><rect x="0.5" y="0.5" width="14" height="14" fill="#f4f8ff" stroke="#3a8ae8"/><rect x="1" y="1" width="13" height="6.5" fill="#1a9af8"/><text x="7.5" y="7" font-size="7" font-family="Liberation Sans" font-weight="700" fill="#fff" text-anchor="middle">VB</text><path d="M4 9v4.5M11 9v4.5" stroke="#0a0a40" stroke-width="1.5"/><rect x="6.2" y="9.2" width="2.6" height="4.1" fill="none" stroke="#0a0a40" stroke-width="1.3"/><path d="M0.5 14.5h14v-14" stroke="#1a5ab8" fill="none"/></svg>
<div class="tr" style="left:161px;top:804px;letter-spacing:-0.132px;">Apri_file_di_scrittura</div>
<div class="a" style="left:32px;top:838px;width:300px;height:1px;background:#fafafa;"></div>
<svg class="a" style="left:141px;top:821px;" width="16" height="16" viewBox="0 0 16 16"><rect x="0.5" y="0.5" width="14" height="14" fill="#f4f8ff" stroke="#3a8ae8"/><rect x="1" y="1" width="13" height="6.5" fill="#1a9af8"/><text x="7.5" y="7" font-size="7" font-family="Liberation Sans" font-weight="700" fill="#fff" text-anchor="middle">VB</text><path d="M4 9v4.5M11 9v4.5" stroke="#0a0a40" stroke-width="1.5"/><rect x="6.2" y="9.2" width="2.6" height="4.1" fill="none" stroke="#0a0a40" stroke-width="1.3"/><path d="M0.5 14.5h14v-14" stroke="#1a5ab8" fill="none"/></svg>
<div class="tr" style="left:161px;top:823px;letter-spacing:-0.103px;">Chiudi_file_di_lettura</div>
<div class="a" style="left:32px;top:857px;width:300px;height:1px;background:#fafafa;"></div>
<svg class="a" style="left:141px;top:840px;" width="16" height="16" viewBox="0 0 16 16"><rect x="0.5" y="0.5" width="14" height="14" fill="#f4f8ff" stroke="#3a8ae8"/><rect x="1" y="1" width="13" height="6.5" fill="#1a9af8"/><text x="7.5" y="7" font-size="7" font-family="Liberation Sans" font-weight="700" fill="#fff" text-anchor="middle">VB</text><path d="M4 9v4.5M11 9v4.5" stroke="#0a0a40" stroke-width="1.5"/><rect x="6.2" y="9.2" width="2.6" height="4.1" fill="none" stroke="#0a0a40" stroke-width="1.3"/><path d="M0.5 14.5h14v-14" stroke="#1a5ab8" fill="none"/></svg>
<div class="tr" style="left:161px;top:842px;letter-spacing:-0.113px;">Chiudi_file_di_scrittura</div>
<div class="a" style="left:32px;top:876px;width:300px;height:1px;background:#fafafa;"></div>
<svg class="a" style="left:141px;top:859px;" width="16" height="16" viewBox="0 0 16 16"><rect x="0.5" y="0.5" width="14" height="14" fill="#f4f8ff" stroke="#3a8ae8"/><rect x="1" y="1" width="13" height="6.5" fill="#1a9af8"/><text x="7.5" y="7" font-size="7" font-family="Liberation Sans" font-weight="700" fill="#fff" text-anchor="middle">VB</text><path d="M4 9v4.5M11 9v4.5" stroke="#0a0a40" stroke-width="1.5"/><rect x="6.2" y="9.2" width="2.6" height="4.1" fill="none" stroke="#0a0a40" stroke-width="1.3"/><path d="M0.5 14.5h14v-14" stroke="#1a5ab8" fill="none"/></svg>
<div class="tr" style="left:161px;top:861px;letter-spacing:-0.143px;">Leggi_dal_file</div>
<div class="a" style="left:32px;top:895px;width:300px;height:1px;background:#fafafa;"></div>
<svg class="a" style="left:141px;top:878px;" width="16" height="16" viewBox="0 0 16 16"><rect x="0.5" y="0.5" width="14" height="14" fill="#f4f8ff" stroke="#3a8ae8"/><rect x="1" y="1" width="13" height="6.5" fill="#1a9af8"/><text x="7.5" y="7" font-size="7" font-family="Liberation Sans" font-weight="700" fill="#fff" text-anchor="middle">VB</text><path d="M4 9v4.5M11 9v4.5" stroke="#0a0a40" stroke-width="1.5"/><rect x="6.2" y="9.2" width="2.6" height="4.1" fill="none" stroke="#0a0a40" stroke-width="1.3"/><path d="M0.5 14.5h14v-14" stroke="#1a5ab8" fill="none"/></svg>
<div class="tr" style="left:161px;top:880px;letter-spacing:-0.192px;">Scrivi_nel_file</div>
<div class="a" style="left:32px;top:914px;width:300px;height:1px;background:#fafafa;"></div>
<svg class="a" style="left:105px;top:897px;" width="16" height="16" viewBox="0 0 16 16"><defs><linearGradient id="sc" x1="0" y1="0" x2="1" y2="1"><stop offset="0" stop-color="#fff"/><stop offset="1" stop-color="#c8d0f0"/></linearGradient></defs><rect x="1" y="0.5" width="13" height="14" fill="url(#sc)"/><rect x="1" y="0.3" width="13" height="2.6" fill="#3a5ae8"/><rect x="1" y="13.6" width="13" height="1.2" fill="#2a3ad0"/><text x="7.5" y="12.4" font-size="10.5" font-weight="700" font-family="Liberation Sans" fill="#1a1a3a" text-anchor="middle">5</text></svg>
<div class="tr" style="left:125px;top:899px;letter-spacing:-0.161px;">Schedulazione</div>
<div class="a" style="left:32px;top:933px;width:300px;height:1px;background:#fafafa;"></div>
<svg class="a" style="left:105px;top:916px;" width="16" height="16" viewBox="0 0 16 16"><path d="M4 5H2.2c-0.8 0-1.2 0.4-1.2 1.2v5.8c0 0.8 0.4 1.2 1.2 1.2h10.6c0.8 0 1.2-0.4 1.2-1.2V6.2c0-0.8-0.4-1.2-1.2-1.2H11" stroke="#2a48d8" stroke-width="2.2" fill="none"/><path d="M6.5 9.5V5.5c0-1.5 1-2.5 2.5-2.5" stroke="#2a48d8" stroke-width="2" fill="none"/><path d="M8.5 0l3.5 3-3.5 3z" fill="#2a48d8"/></svg>
<div class="tr" style="left:125px;top:918px;letter-spacing:-0.427px;">Cicli</div>
<div class="a" style="left:32px;top:952px;width:300px;height:1px;background:#fafafa;"></div>
<svg class="a" style="left:93px;top:939px;" width="6" height="9" viewBox="0 0 6 9"><path d="M0 0v8l5-4z" fill="#000"/></svg>
<svg class="a" style="left:105px;top:935px;" width="16" height="16" viewBox="0 0 16 16"><path d="M0.5 1h4.5l1.5 1.5h5.5v10h-11.5z" fill="#f6d77a" stroke="#c9952c"/><rect x="3.5" y="4.5" width="12" height="10.5" fill="#f8faff" stroke="#6a7ad8"/><path d="M5.5 7.5h3M5.5 9.5h3M5.5 11.5h3" stroke="#1a1a4a" stroke-width="1.2"/><path d="M10.5 5v10M12.5 5v10M14.5 5v10" stroke="#9aa4c8" stroke-width="0.9"/></svg>
<div class="tr" style="left:125px;top:937px;letter-spacing:-0.118px;">Protocolli</div>
<div class="a" style="left:32px;top:971px;width:300px;height:1px;background:#fafafa;"></div>
<svg class="a" style="left:105px;top:954px;" width="16" height="16" viewBox="0 0 16 16"><defs><linearGradient id="ls" x1="0" y1="0" x2="1" y2="1"><stop offset="0" stop-color="#fff"/><stop offset="1" stop-color="#dfe4f8"/></linearGradient></defs><rect x="0.5" y="0.5" width="14.5" height="13.5" fill="url(#ls)" stroke="#6a7ad8"/><text x="1.2" y="6.6" font-size="6.5" font-weight="700" font-family="Liberation Sans" fill="#1a1a3a">1.</text><text x="1.2" y="13" font-size="6.5" font-weight="700" font-family="Liberation Sans" fill="#1a1a3a">2.</text><circle cx="10.3" cy="4.2" r="2.6" fill="#f0a020"/><path d="M7.8 12.6l2.6-4.6 2.6 4.6z" fill="#2a40c8"/><path d="M14 6h1M14 12.5h1" stroke="#1a1a3a"/></svg>
<div class="tr" style="left:125px;top:956px;letter-spacing:-0.001px;">Elenchi di grafiche e testi</div>
<svg class="a" style="left:105px;top:973px;" width="16" height="16" viewBox="0 0 16 16"><circle cx="4.2" cy="1.8" r="1.6" fill="#1a2a4a"/><path d="M2 4.5h4.4c0.4 0 0.6 0.3 0.6 0.6v6.2H1.4V5.1c0-0.3 0.2-0.6 0.6-0.6z" fill="#2a7ac0"/><rect x="2.4" y="11" width="3.8" height="4.6" fill="#1a5a9a"/><circle cx="11" cy="7.2" r="2.6" fill="none" stroke="#d8b020" stroke-width="2"/><path d="M11 9.6v5.6M11 12.5h2M11 14.5h2" stroke="#d8b020" stroke-width="1.8"/></svg>
<div class="tr" style="left:125px;top:975px;letter-spacing:0.025px;">Gestione utenti</div>
<div class="a" style="left:311px;top:174px;width:1px;height:811px;background:#c8c8c8;"></div>
<div class="a" style="left:57px;top:174px;width:2px;height:811px;background:repeating-linear-gradient(#3a6ad8 0 1px,transparent 1px 3px)"></div>
<div class="a" style="left:55px;top:199px;width:6px;height:4px;background:#3a6ad8;"></div>
<div class="a" style="left:332px;top:174px;width:18px;height:811px;background:#c4c4c4;"></div>
<div class="a" style="left:331px;top:174px;width:1px;height:811px;background:#ffffff;"></div>
<div class="a" style="left:332px;top:174px;width:17px;height:18px;background:linear-gradient(#ececec,#dadada);border:1px solid #fff;box-shadow:1px 1px 0 #a8a8a8"></div>
<svg class="a" style="left:335px;top:179px;" width="11" height="7" viewBox="0 0 11 7"><path d="M1 6l4.5-4.5L10 6" stroke="#555" stroke-width="2" fill="none"/></svg>
<div class="a" style="left:332px;top:239px;width:17px;height:324px;background:linear-gradient(90deg,#f0f0f0,#d6d6d6);border:1px solid #8a8a8a;box-shadow:inset 0 0 0 1px #fff"></div>
<svg class="a" style="left:337px;top:398px;" width="8" height="7" viewBox="0 0 8 7"><path d="M0 0.5h8M0 2.5h8M0 4.5h8M0 6.5h8" stroke="#555"/></svg>
<div class="a" style="left:332px;top:967px;width:17px;height:18px;background:linear-gradient(#ececec,#dadada);border:1px solid #fff;box-shadow:1px 1px 0 #a8a8a8"></div>
<svg class="a" style="left:335px;top:973px;" width="11" height="7" viewBox="0 0 11 7"><path d="M1 1l4.5 4.5L10 1" stroke="#555" stroke-width="2" fill="none"/></svg>
<div class="a" style="left:32px;top:985px;width:318px;height:17px;background:#c4c4c4;"></div>
<div class="a" style="left:32px;top:985px;width:18px;height:17px;background:linear-gradient(#ececec,#dadada);border:1px solid #fff;box-shadow:1px 1px 0 #a8a8a8"></div>
<svg class="a" style="left:37px;top:988px;" width="7" height="11" viewBox="0 0 7 11"><path d="M6 1L1.5 5.5 6 10" stroke="#555" stroke-width="2" fill="none"/></svg>
<div class="a" style="left:51px;top:985px;width:256px;height:17px;background:linear-gradient(#f0f0f0,#d6d6d6);border:1px solid #8a8a8a;box-shadow:inset 0 0 0 1px #fff"></div>
<svg class="a" style="left:176px;top:990px;" width="7" height="8" viewBox="0 0 7 8"><path d="M0.5 0v8M2.5 0v8M4.5 0v8M6.5 0v8" stroke="#555"/></svg>
<div class="a" style="left:314px;top:985px;width:18px;height:17px;background:linear-gradient(#ececec,#dadada);border:1px solid #fff;box-shadow:1px 1px 0 #a8a8a8"></div>
<svg class="a" style="left:320px;top:988px;" width="7" height="11" viewBox="0 0 7 11"><path d="M1 1l4.5 4.5L1 10" stroke="#555" stroke-width="2" fill="none"/></svg>
<div class="a" style="left:32px;top:1002px;width:318px;height:3px;background:#1e2433;"></div>
<div class="a" style="left:32px;top:1005px;width:318px;height:21px;background:linear-gradient(#f0f0f0,#dadada);"></div>
<div class="a" style="left:52px;top:1005px;width:1px;height:21px;background:#b0b0b0;"></div>
<svg class="a" style="left:37px;top:1011px;" width="8" height="10" viewBox="0 0 8 10"><path d="M1.5 1l4 4-4 4" stroke="#111" stroke-width="2" fill="none"/></svg>
<div class="t" style="left:57px;top:1009px;font-size:15px;color:#111;font-weight:400;font-family:'Liberation Sans',sans-serif;letter-spacing:0.019px;-webkit-text-stroke:0.45px #111;">Progetti di riferimento</div>
<div class="a" style="left:32px;top:1029px;width:318px;height:21px;background:linear-gradient(#f0f0f0,#dadada);"></div>
<div class="a" style="left:52px;top:1029px;width:1px;height:21px;background:#b0b0b0;"></div>
<svg class="a" style="left:37px;top:1035px;" width="8" height="10" viewBox="0 0 8 10"><path d="M1.5 1l4 4-4 4" stroke="#111" stroke-width="2" fill="none"/></svg>
<div class="t" style="left:57px;top:1033px;font-size:15px;color:#111;font-weight:400;font-family:'Liberation Sans',sans-serif;letter-spacing:0.027px;-webkit-text-stroke:0.45px #111;">Vista dettagli</div>
<div class="a" style="left:32px;top:1026px;width:318px;height:3px;background:#1e2433;"></div>
<div class="a" style="left:350px;top:74px;width:3px;height:976px;background:#1e2433;"></div>
<div class="a" style="left:353px;top:74px;width:1550px;height:24px;background:#2b3149;"></div>
<div class="t" style="left:358px;top:79px;font-size:14.2px;color:#fff;-webkit-text-stroke:0.3px #fff;letter-spacing:-0.084px;">Castagner spartisemi VBS R24</div>
<svg class="a" style="left:562px;top:81px;" width="5" height="10" viewBox="0 0 5 10"><path d="M0 0.5v9l4.5-4.5z" fill="#fff"/></svg>
<div class="t" style="left:577px;top:79px;font-size:14.2px;color:#fff;-webkit-text-stroke:0.3px #fff;letter-spacing:-0.237px;">Stazione PC [SIMATIC PC station]</div>
<svg class="a" style="left:796px;top:81px;" width="5" height="10" viewBox="0 0 5 10"><path d="M0 0.5v9l4.5-4.5z" fill="#fff"/></svg>
<div class="t" style="left:811px;top:79px;font-size:14.2px;color:#fff;-webkit-text-stroke:0.3px #fff;letter-spacing:-0.275px;">HMI_RT_2 [WinCC RT Advanced]</div>
<svg class="a" style="left:1027px;top:81px;" width="5" height="10" viewBox="0 0 5 10"><path d="M0 0.5v9l4.5-4.5z" fill="#fff"/></svg>
<div class="t" style="left:1042px;top:79px;font-size:14.2px;color:#fff;-webkit-text-stroke:0.3px #fff;letter-spacing:0.122px;">Script</div>
<svg class="a" style="left:1089px;top:81px;" width="5" height="10" viewBox="0 0 5 10"><path d="M0 0.5v9l4.5-4.5z" fill="#fff"/></svg>
<div class="t" style="left:1104px;top:79px;font-size:14.2px;color:#fff;-webkit-text-stroke:0.3px #fff;letter-spacing:-0.127px;">VB Script</div>
<svg class="a" style="left:1172px;top:81px;" width="5" height="10" viewBox="0 0 5 10"><path d="M0 0.5v9l4.5-4.5z" fill="#fff"/></svg>
<div class="t" style="left:1187px;top:79px;font-size:14.2px;color:#fff;-webkit-text-stroke:0.3px #fff;letter-spacing:0.387px;">Leggi_dal_file</div>
<svg class="a" style="left:1830px;top:79px;" width="70" height="14" viewBox="0 0 70 14"><rect x="2" y="9" width="11" height="3" fill="#fff"/><path d="M23 2h7v7" stroke="#fff" stroke-width="2" fill="none"/><rect x="19.5" y="3.5" width="10" height="9" fill="#fff" stroke="#2b3149"/><rect x="39" y="1" width="11" height="2" fill="#fff"/><rect x="39" y="4" width="11" height="8" fill="#fff"/><path d="M56.5 2l10 10M66.5 2l-10 10" stroke="#fff" stroke-width="2.2"/></svg>
<div class="a" style="left:353px;top:98px;width:1550px;height:3px;background:#efefef;"></div>
<div class="a" style="left:353px;top:101px;width:1550px;height:24px;background:linear-gradient(#cecece,#c6c6c6);"></div>
<div class="a" style="left:353px;top:125px;width:1550px;height:1px;background:#7a7a7a;"></div>
<div class="a" style="left:353px;top:126px;width:1550px;height:27px;background:#e9e9e9;"></div>
<svg class="a" style="left:360px;top:131px;" width="16" height="17" viewBox="0 0 16 17"><rect x="0.5" y="0.5" width="12" height="12" fill="#fff" stroke="#5a6aa8"/><path d="M13 1v12M15 2v11" stroke="#9a9a9a"/><path d="M3 3h2v2H3zM7 3h2v2H7zM3 7h2v2H3zM7 7h2v2H7z" fill="#1a1a3a"/><path d="M4 12l3 3 6-6" stroke="#1a9a2a" stroke-width="2" fill="none"/></svg>
<div class="a" style="left:381px;top:128px;width:1px;height:22px;border-left:1px dotted #8a8a8a"></div>
<svg class="a" style="left:389px;top:131px;" width="16" height="17" viewBox="0 0 16 17"><path d="M1 2h15M1 15h15" stroke="#a0a0a0" stroke-width="2"/><path d="M1 8.5h6M5 5.5l3 3-3 3" stroke="#111" stroke-width="2" fill="none"/><path d="M9 5h7M9 8.5h7M9 12h7" stroke="#3a5ae8" stroke-width="2"/></svg>
<svg class="a" style="left:413px;top:131px;" width="16" height="17" viewBox="0 0 16 17"><path d="M1 2h15M1 15h15" stroke="#a0a0a0" stroke-width="2"/><path d="M8 8.5H2M5 5.5l-3 3 3 3" stroke="#111" stroke-width="2" fill="none"/><path d="M9 5h7M9 8.5h7M9 12h7" stroke="#3a5ae8" stroke-width="2"/></svg>
<div class="a" style="left:435px;top:128px;width:1px;height:22px;border-left:1px dotted #8a8a8a"></div>
<svg class="a" style="left:444px;top:131px;" width="14" height="17" viewBox="0 0 14 17"><path d="M1.5 1v7" stroke="#111" stroke-width="2"/><path d="M6 9h7M6 12h7M6 15h7" stroke="#3a5ae8" stroke-width="2"/></svg>
<svg class="a" style="left:466px;top:131px;" width="17" height="17" viewBox="0 0 17 17"><path d="M3.5 1v7" stroke="#111" stroke-width="2"/><path d="M0 0l8 8" stroke="#e81a1a" stroke-width="1.4"/><path d="M8 9h8M8 12h8M8 15h8" stroke="#3a5ae8" stroke-width="2"/></svg>
<div class="a" style="left:487px;top:128px;width:1px;height:22px;border-left:1px dotted #8a8a8a"></div>
<svg class="a" style="left:497px;top:131px;" width="14" height="17" viewBox="0 0 14 17"><path d="M0 0h6v16l-3-3-3 3z" fill="#3a4ad8"/><path d="M8 0h6v16l-3-3-3 3z" fill="#8a8a8a"/></svg>
<svg class="a" style="left:520px;top:131px;" width="15" height="17" viewBox="0 0 15 17"><path d="M5 3c-4 1-5 6-2 9" stroke="#1a2a6a" stroke-width="2" fill="none"/><path d="M2 9l2 4 3-3" fill="#1a2a6a"/><path d="M9 4h5v12l-2.5-2-2.5 2z" fill="#3a4ad8"/></svg>
<svg class="a" style="left:544px;top:131px;" width="15" height="17" viewBox="0 0 15 17"><path d="M6 5c-4 1-5 6-2 9" stroke="#1a2a6a" stroke-width="2" fill="none"/><path d="M3 3l4 1-2 3" fill="#1a2a6a"/><path d="M9 0h5v12l-2.5-2-2.5 2z" fill="#3a4ad8"/></svg>
<svg class="a" style="left:567px;top:131px;" width="17" height="17" viewBox="0 0 17 17"><path d="M0 0h4v12l-2-2-2 2zM5 0h4v12l-2-2-2 2zM10 0h4v12l-2-2-2 2z" fill="#3a4ad8"/><path d="M9 10l6 6M15 10l-6 6" stroke="#111" stroke-width="1.6"/></svg>
<svg class="a" style="left:591px;top:131px;" width="17" height="17" viewBox="0 0 17 17"><path d="M5 3c-4 1-5 6-2 9" stroke="#1a2a6a" stroke-width="2" fill="none"/><path d="M2 9l2 4 3-3" fill="#1a2a6a"/><path d="M8 5h8M8 8.5h8" stroke="#9a9a9a" stroke-width="2"/><path d="M8 12h8" stroke="#3a5ae8" stroke-width="2"/></svg>
<div class="a" style="left:612px;top:128px;width:1px;height:22px;border-left:1px dotted #8a8a8a"></div>
<svg class="a" style="left:620px;top:131px;" width="17" height="17" viewBox="0 0 17 17"><rect x="0.5" y="0.5" width="5" height="5" fill="#fff" stroke="#1a2a6a"/><rect x="6.5" y="0.5" width="5" height="5" fill="#fff" stroke="#1a2a6a"/><path d="M2 1.5v3M8 1.5v3" stroke="#1a2a6a"/><path d="M13 6v2M13 9v7" stroke="#111" stroke-width="2.4"/></svg>
<svg class="a" style="left:643px;top:131px;" width="17" height="17" viewBox="0 0 17 17"><path d="M1 0v10l2.5-2.5L6 12l1.5-1L5 6.5h4z" fill="#111"/><rect x="4" y="11" width="13" height="6" fill="#f0d030" stroke="#b8a020"/></svg>
<div class="a" style="left:665px;top:128px;width:1px;height:22px;border-left:1px dotted #8a8a8a"></div>
<svg class="a" style="left:673px;top:131px;" width="16" height="17" viewBox="0 0 16 17"><rect x="0.5" y="0.5" width="14" height="15" fill="#f4f6ff" stroke="#6a7ad8"/><path d="M15 1v15.5H1" stroke="#a8b0d8" fill="none"/><path d="M2.5 3.5l2.5-1v2z" fill="#20b0e8"/><path d="M6.5 3.5l2.5-1.2v2.4z" fill="#7a7a9a"/><circle cx="12" cy="3.5" r="1.6" fill="none" stroke="#4a4a6a"/><path d="M2.5 7.5l2.5-1.2v2.4z" fill="#2a40e0"/><circle cx="8" cy="7.5" r="1.7" fill="#e020c8"/><path d="M10.5 6h3l-1.5 3z" fill="#1a1a3a"/><rect x="2.5" y="11" width="2.5" height="2.5" fill="#e8d020"/><path d="M6.5 12.2h4M11 11l2 1.2-2 1.2z" stroke="#7a7a9a" fill="#7a7a9a"/></svg>
<svg class="a" style="left:697px;top:131px;" width="17" height="17" viewBox="0 0 17 17"><rect x="0.5" y="0.5" width="9" height="10.5" fill="#fff" stroke="#8a94c8"/><path d="M9.8 1v10.5" stroke="#c0c4d8"/><path d="M2 3.2h1M4 3.2h4M2 5.6h1M4 5.6h4M2 8h1M4 8h4" stroke="#2a2a4a" stroke-width="1.1"/><path d="M1 13h6M2 14.6h6M3 16.2h6" stroke="#2a2a4a" stroke-width="1"/><path d="M8 11.5l4-5 4.5 4-4 5.5z" fill="#c050e8"/><path d="M12.5 15l4-4.5v1.2l-4 4.3z" fill="#8a20b0"/></svg>
<svg class="a" style="left:721px;top:131px;" width="17" height="17" viewBox="0 0 17 17"><rect x="0.5" y="0.5" width="9" height="10.5" fill="#fff" stroke="#8a94c8"/><path d="M9.8 1v10.5" stroke="#c0c4d8"/><path d="M2 3.2h1M4 3.2h4M2 5.6h1M4 5.6h4M2 8h1M4 8h4" stroke="#2a2a4a" stroke-width="1.1"/><path d="M1 13h6M2 14.6h6M3 16.2h6" stroke="#2a2a4a" stroke-width="1"/><path d="M8 11.5l4-5 4.5 4-4 5.5z" fill="#4a68e8"/><path d="M12.5 15l4-4.5v1.2l-4 4.3z" fill="#2a38b0"/></svg>
<svg class="a" style="left:745px;top:131px;" width="17" height="17" viewBox="0 0 17 17"><rect x="0.5" y="0.5" width="9" height="10.5" fill="#fff" stroke="#8a94c8"/><path d="M9.8 1v10.5" stroke="#c0c4d8"/><path d="M2 3.2h1M4 3.2h4M2 5.6h1M4 5.6h4M2 8h1M4 8h4" stroke="#2a2a4a" stroke-width="1.1"/><path d="M1 13h6M2 14.6h6M3 16.2h6" stroke="#2a2a4a" stroke-width="1"/><path d="M8 11.5l4-5 4.5 4-4 5.5z" fill="#8a94b0"/><path d="M12.5 15l4-4.5v1.2l-4 4.3z" fill="#5a6478"/></svg>
<svg class="a" style="left:769px;top:131px;" width="16" height="17" viewBox="0 0 16 17"><rect x="0.5" y="0.5" width="9" height="10.5" fill="#fff" stroke="#8a94c8"/><path d="M9.8 1v10.5" stroke="#c0c4d8"/><path d="M2 3.2h1M4 3.2h4M2 5.6h1M4 5.6h4M2 8h1M4 8h4" stroke="#2a2a4a" stroke-width="1.1"/><rect x="6.5" y="9.5" width="9" height="6.5" rx="1.2" fill="#e8eaf4" stroke="#4a5068" stroke-width="1.3"/><path d="M9 12h4M9 13.8h4" stroke="#2a2a4a"/></svg>
<svg class="a" style="left:793px;top:131px;" width="17" height="17" viewBox="0 0 17 17"><rect x="0.5" y="0.5" width="9" height="10.5" fill="#fff" stroke="#8a94c8"/><path d="M9.8 1v10.5" stroke="#c0c4d8"/><path d="M2 3.2h1M4 3.2h4M2 5.6h1M4 5.6h4M2 8h1M4 8h4" stroke="#2a2a4a" stroke-width="1.1"/><path d="M11.5 7.5l4.5 2v5l-4.5 2.2-4.5-2.2v-5z" fill="#e8e020" stroke="#b8a810" stroke-width="0.6"/><path d="M7 9.5l4.5 2 4.5-2" stroke="#fff860" stroke-width="0.8" fill="none"/></svg>
<div class="a" style="left:814px;top:128px;width:1px;height:22px;border-left:1px dotted #8a8a8a"></div>
<div class="t" style="left:861px;top:134px;font-size:12.3px;color:#111;font-weight:400;font-family:'Liberation Sans',sans-serif;letter-spacing:-0.221px;-webkit-text-stroke:0.2px #111;">Codepage</div>
<div class="a" style="left:929px;top:131px;width:150px;height:18px;background:#e4e4e4;border:1px solid #a8a8a8"></div>
<div class="a" style="left:1062px;top:132px;width:1px;height:16px;background:#a8a8a8;"></div>
<svg class="a" style="left:1066px;top:137px;" width="9" height="5" viewBox="0 0 9 5"><path d="M0 0h9L4.5 5z" fill="#7a7a7a"/></svg>
<div class="a" style="left:353px;top:153px;width:1550px;height:869px;background:#fff;"></div>
<div class="a" style="left:353px;top:153px;width:16px;height:869px;background:#ebebeb;"></div>
<div class="a" style="left:353px;top:153px;width:1px;height:869px;background:#f6f6f6;"></div>
<div class="a" style="left:389px;top:153px;width:0;height:869px;border-left:1px dotted #1a9a9a"></div>
<div class="a" style="left:390px;top:153px;width:1513px;height:15px;background:#d8d8d8;"></div>
<div class="a" style="left:390px;top:843px;width:1513px;height:15px;background:#d3d3d3;"></div>
<div class="ln" style="top:155px">1</div>
<div class="cl" style="top:155px"><span class="k">Sub</span> <span class="p">Leggi_dal_file</span>()</div>
<div class="ln" style="top:170px">2</div>
<div class="cl" style="top:170px"><span class="k">Dim</span> fso, f, field, MyZf</div>
<div class="ln" style="top:185px">3</div>
<div class="cl" style="top:185px"></div>
<div class="ln" style="top:200px">4</div>
<div class="cl" style="top:200px"><span class="c">' Errori</span></div>
<div class="ln" style="top:215px">5</div>
<div class="cl" style="top:215px"><span class="k">On Error Resume Next</span></div>
<div class="ln" style="top:230px">6</div>
<div class="cl" style="top:230px"></div>
<div class="ln" style="top:245px">7</div>
<div class="cl" style="top:245px"><span class="c">' Crea oggetto file</span></div>
<div class="ln" style="top:260px">8</div>
<div class="cl" style="top:260px"><span class="k">Set</span> fso = <span class="p">CreateObject</span>(<span class="s">"Scripting.FileSystemObject"</span>)</div>
<div class="ln" style="top:275px">9</div>
<div class="cl" style="top:275px"><span class="k">If</span> <span class="g">Err.Number</span> &lt;&gt; <span class="n">0</span> <span class="k">Then</span></div>
<div class="ln" style="top:290px">10</div>
<div class="cl" style="top:290px">    <span class="m">ShowSystemAlarm</span> <span class="s">"Error #"</span> <span class="amp">&amp;</span> <span class="p">CStr</span>(<span class="g">Err.Number</span>) <span class="amp">&amp;</span> <span class="s">" "</span> <span class="amp">&amp;</span> <span class="g">Err.Description</span></div>
<div class="ln" style="top:305px">11</div>
<div class="cl" style="top:305px">    <span class="g">Err.Clear</span></div>
<div class="ln" style="top:320px">12</div>
<div class="cl" style="top:320px">    <span class="k">Exit Sub</span></div>
<div class="ln" style="top:335px">13</div>
<div class="cl" style="top:335px"><span class="k">End If</span></div>
<div class="ln" style="top:350px">14</div>
<div class="cl" style="top:350px"></div>
<div class="ln" style="top:365px">15</div>
<div class="cl" style="top:365px"><span class="k">Set</span> f = fso<span class="g">.OpenTextFile</span>(<span class="m">FileNameLeggi</span>, <span class="n">1</span>, <span class="n">0</span>, <span class="n">-2</span>)</div>
<div class="ln" style="top:380px">16</div>
<div class="cl" style="top:380px"><span class="k">If</span> <span class="g">Err.Number</span> &lt;&gt; <span class="n">0</span> <span class="k">Then</span></div>
<div class="ln" style="top:395px">17</div>
<div class="cl" style="top:395px">    <span class="m">ShowSystemAlarm</span> <span class="s">"Error #"</span> <span class="amp">&amp;</span> <span class="p">CStr</span>(<span class="g">Err.Number</span>) <span class="amp">&amp;</span> <span class="s">" "</span> <span class="amp">&amp;</span> <span class="g">Err.Description</span></div>
<div class="ln" style="top:410px">18</div>
<div class="cl" style="top:410px">    <span class="g">Err.Clear</span></div>
<div class="ln" style="top:425px">19</div>
<div class="cl" style="top:425px">    <span class="k">Exit Sub</span></div>
<div class="ln" style="top:440px">20</div>
<div class="cl" style="top:440px"><span class="k">End If</span></div>
<div class="ln" style="top:455px">21</div>
<div class="cl" style="top:455px"></div>
<div class="ln" style="top:470px">22</div>
<div class="cl" style="top:470px"><span class="c">' Leggi i valori fino alla fine del file</span></div>
<div class="ln" style="top:485px">23</div>
<div class="cl" style="top:485px"><span class="k">Do While</span> Not f<span class="g">.AtEndOfStream</span></div>
<div class="ln" style="top:500px">24</div>
<div class="cl" style="top:500px">    MyZf = f<span class="g">.ReadLine</span></div>
<div class="ln" style="top:515px">25</div>
<div class="cl" style="top:515px"><span class="k">Loop</span></div>
<div class="ln" style="top:530px">26</div>
<div class="cl" style="top:530px">field = <span class="p">Split</span>(MyZf, <span class="s">";"</span>)</div>
<div class="ln" style="top:545px">27</div>
<div class="cl" style="top:545px"></div>
<div class="ln" style="top:560px">28</div>
<div class="cl" style="top:560px"><span class="v">OrdineIN1</span> = field(<span class="n">0</span>)</div>
<div class="ln" style="top:575px">29</div>
<div class="cl" style="top:575px"><span class="v">DataIN1</span> = field(<span class="n">1</span>)</div>
<div class="ln" style="top:590px">30</div>
<div class="cl" style="top:590px"><span class="v">MinutiIN1</span> = field(<span class="n">2</span>)</div>
<div class="ln" style="top:605px">31</div>
<div class="cl" style="top:605px"><span class="v">KGIN1</span> = field(<span class="n">3</span>)</div>
<div class="ln" style="top:620px">32</div>
<div class="cl" style="top:620px"><span class="v">OrdineIN2</span> = field(<span class="n">4</span>)</div>
<div class="ln" style="top:635px">33</div>
<div class="cl" style="top:635px"><span class="v">DataIN2</span> = field(<span class="n">5</span>)</div>
<div class="ln" style="top:650px">34</div>
<div class="cl" style="top:650px"><span class="v">MinutiIN2</span> = field(<span class="n">6</span>)</div>
<div class="ln" style="top:665px">35</div>
<div class="cl" style="top:665px"><span class="v">KGIN2</span> = field(<span class="n">7</span>)</div>
<div class="ln" style="top:680px">36</div>
<div class="cl" style="top:680px"><span class="v">OrdineIN3</span> = field(<span class="n">8</span>)</div>
<div class="ln" style="top:695px">37</div>
<div class="cl" style="top:695px"><span class="v">DataIN3</span> = field(<span class="n">9</span>)</div>
<div class="ln" style="top:710px">38</div>
<div class="cl" style="top:710px"><span class="v">MinutiIN3</span> = field(<span class="n">10</span>)</div>
<div class="ln" style="top:725px">39</div>
<div class="cl" style="top:725px"><span class="v">KGIN3</span> = field(<span class="n">11</span>)</div>
<div class="ln" style="top:740px">40</div>
<div class="cl" style="top:740px"></div>
<div class="ln" style="top:755px">41</div>
<div class="cl" style="top:755px"><span class="c">' Pulisco</span></div>
<div class="ln" style="top:770px">42</div>
<div class="cl" style="top:770px">fso.Close</div>
<div class="ln" style="top:785px">43</div>
<div class="cl" style="top:785px"><span class="k">Set</span> f = <span class="n">Nothing</span></div>
<div class="ln" style="top:800px">44</div>
<div class="cl" style="top:800px"><span class="k">Set</span> fso = <span class="n">Nothing</span></div>
<div class="ln" style="top:815px">45</div>
<div class="cl" style="top:815px"><span class="m">ShowSystemAlarm</span> <span class="s">"Readout of the data was successful!"</span></div>
<div class="ln" style="top:830px">46</div>
<div class="cl" style="top:830px"></div>
<div class="ln" style="top:845px">47</div>
<div class="cl" style="top:845px"><span class="k">End Sub</span></div>
<div class="a" style="left:353px;top:1022px;width:1550px;height:3px;background:#1e2433;"></div>
<div class="a" style="left:353px;top:1025px;width:1550px;height:25px;background:#b3b3b3;"></div>
<div class="a" style="left:1466px;top:1029px;width:105px;height:21px;background:linear-gradient(#dedede,#d2d2d2);border:1px solid #8a8a8a;border-bottom:none"></div>
<div class="a" style="left:1573px;top:1029px;width:134px;height:21px;background:linear-gradient(#ececec,#d2d2d2);border:1px solid #8a8a8a;border-bottom:none"></div>
<div class="a" style="left:1708px;top:1029px;width:121px;height:21px;background:linear-gradient(#dedede,#d2d2d2);border:1px solid #8a8a8a;border-bottom:none"></div>
<svg class="a" style="left:1469px;top:1032px;" width="17" height="16" viewBox="0 0 17 16"><rect x="0.5" y="0.5" width="12" height="14" fill="#fff" stroke="#7a8ac8"/><path d="M2 3h4M2 5h4M2 7h3" stroke="#4a5a9a"/><circle cx="8" cy="8" r="3.5" fill="#e8f0ff" stroke="#2a2a5a" stroke-width="1.4"/><path d="M10.5 10.5l4 4" stroke="#c8a020" stroke-width="2.4"/></svg>
<div class="t" style="left:1488px;top:1034px;font-size:14.2px;color:#555;font-weight:400;font-family:'Liberation Sans',sans-serif;letter-spacing:-0.064px;">Proprietà</div>
<svg class="a" style="left:1576px;top:1032px;" width="18" height="16" viewBox="0 0 18 16"><rect x="1.5" y="1.5" width="12" height="13" fill="#fff" stroke="#7a8ac8"/><path d="M0 3l3-3M0 0h3v3" stroke="#111" stroke-width="1.2" fill="none"/><text x="5" y="12" font-size="11" font-weight="700" font-family="Liberation Serif" fill="#1a1a4a">i</text><path d="M10 12h6M14 10l2 2-2 2" stroke="#111" stroke-width="1.4" fill="none"/></svg>
<div class="t" style="left:1594px;top:1034px;font-size:14.6px;color:#111;font-weight:400;font-family:'Liberation Sans',sans-serif;letter-spacing:0.042px;-webkit-text-stroke:0.45px #111;">Informazioni</div>
<svg class="a" style="left:1688px;top:1033px;" width="15" height="15" viewBox="0 0 15 15"><circle cx="7.5" cy="7.5" r="6.3" fill="#f2d818" stroke="#9a8a10"/><text x="7.5" y="11.5" font-size="10" font-weight="700" font-family="Liberation Serif" fill="#111" text-anchor="middle">i</text></svg>
<svg class="a" style="left:1711px;top:1032px;" width="16" height="16" viewBox="0 0 16 16"><rect x="0.5" y="0.5" width="12" height="14" fill="#eef0ff" stroke="#9aa4e0"/><path d="M3 2v5c0 3 4 3 4 0V2" stroke="#1a1a3a" stroke-width="1.4" fill="none"/><path d="M5 9v2c0 2 3 2 4 0" stroke="#1a1a3a" stroke-width="1.2" fill="none"/><circle cx="9" cy="10" r="1.5" fill="#1a1a3a"/></svg>
<div class="t" style="left:1730px;top:1034px;font-size:14.5px;color:#555;font-weight:400;font-family:'Liberation Sans',sans-serif;letter-spacing:0.021px;">Diagnostica</div>
<svg class="a" style="left:1849px;top:1031px;" width="46" height="14" viewBox="0 0 46 14"><rect x="1" y="4" width="8" height="8" fill="#fff"/><path d="M4 1h7v7" stroke="#fff" stroke-width="1.6" fill="none"/><rect x="19.5" y="1.5" width="9" height="10" fill="none" stroke="#e8e8e8"/><path d="M20 5h8M20 8h8" stroke="#e8e8e8"/><path d="M34 11l5.5-6 5.5 6z" fill="#fff"/></svg>
<div class="a" style="left:1903px;top:74px;width:1px;height:976px;background:#1e2433;"></div>
<div class="a" style="left:1904px;top:74px;width:24px;height:976px;background:#b4b4b4;"></div>
<svg class="a" style="left:1910px;top:80px;" width="8" height="13" viewBox="0 0 8 13"><path d="M7 0v12.5L0.5 6.25z" fill="#f2f2f2"/></svg>
<div class="a" style="left:1904px;top:104px;width:21px;height:104px;background:linear-gradient(90deg,#f2f2f2,#e2e2e2);border:1px solid #9a9a9a;border-left:none"></div>
<div class="a" style="left:1904px;top:211px;width:21px;height:83px;background:linear-gradient(90deg,#f2f2f2,#e2e2e2);border:1px solid #9a9a9a;border-left:none"></div>
<div class="a" style="left:1904px;top:297px;width:21px;height:117px;background:linear-gradient(90deg,#f2f2f2,#e2e2e2);border:1px solid #9a9a9a;border-left:none"></div>
<div class="a" style="left:1904px;top:416px;width:21px;height:73px;background:linear-gradient(90deg,#f2f2f2,#e2e2e2);border:1px solid #9a9a9a;border-left:none"></div>
<div class="t" style="left:1921px;top:126px;font-size:13px;color:#111;font-weight:700;transform-origin:0 0;transform:rotate(90deg)">Istruzioni</div>
<div class="t" style="left:1921px;top:233px;font-size:13.2px;color:#5a5a5a;font-weight:700;transform-origin:0 0;transform:rotate(90deg)">Ordini</div>
<div class="t" style="left:1921px;top:319px;font-size:13.2px;color:#5a5a5a;font-weight:700;transform-origin:0 0;transform:rotate(90deg)">Biblioteche</div>
<div class="t" style="left:1921px;top:427px;font-size:13.2px;color:#5a5a5a;font-weight:700;transform-origin:0 0;transform:rotate(90deg)">Add-In</div>
<svg class="a" style="left:1906px;top:106px;" width="17" height="17" viewBox="0 0 17 17"><rect x="0.5" y="7.5" width="10" height="7" fill="#fff" stroke="#5a7ad8"/><text x="2" y="14" font-size="6.5" font-weight="700" font-family="Liberation Sans" fill="#1a1a4a">01</text><path d="M10 1v8M6 5h8M7 2l6 6M13 2l-6 6" stroke="#e020e8" stroke-width="1.1"/><path d="M11 9l5 4" stroke="#4a6ac8" stroke-width="2"/></svg>
<svg class="a" style="left:1906px;top:213px;" width="17" height="17" viewBox="0 0 17 17"><rect x="0.5" y="1.5" width="11" height="13" fill="#fff" stroke="#c8a040"/><rect x="3" y="0" width="6" height="3" fill="#8a8a8a"/><path d="M2 5h1M4 5h6M2 7h1M4 7h6M2 9h1M4 9h6" stroke="#1a1a6a"/><path d="M6 11l3 3 6-7" stroke="#1a9a2a" stroke-width="2.2" fill="none"/></svg>
<svg class="a" style="left:1906px;top:300px;" width="17" height="15" viewBox="0 0 17 15"><path d="M1 1h6v12H1zM8 1h7v12H8z" fill="#fff" stroke="#1a2a8a" stroke-width="1.3"/></svg>
<div class="a" style="left:8px;top:1050px;width:1920px;height:28px;background:#1c1c1c;"></div>
<div class="a" style="left:8px;top:1078px;width:1920px;height:2px;background:#2a5fa8;"></div>
<svg class="a" style="left:44px;top:1058px;" width="8" height="14" viewBox="0 0 8 14"><path d="M7 0v14L0 7z" fill="#fff"/></svg>
<div class="t" style="left:61px;top:1059px;font-size:14.8px;color:#fff;font-weight:400;font-family:'Liberation Sans',sans-serif;letter-spacing:0.001px;-webkit-text-stroke:0.4px #fff;">Vista portale</div>
<div class="a" style="left:189px;top:1055px;width:113px;height:20px;background:#c8c8c8;"></div>
<svg class="a" style="left:193px;top:1057px;" width="16" height="16" viewBox="0 0 16 16"><rect x="0.5" y="0.5" width="14" height="14" fill="#fff" stroke="#1a2a6a"/><rect x="0.5" y="0.5" width="14" height="3" fill="#1a2a6a"/><path d="M2 6h2M2 8h2M2 10h2M2 12h2" stroke="#5a6aa8"/><path d="M6 6h3v2H6zM10 6h3v2h-3zM6 10h3v2H6zM10 10h3v2h-3z" fill="#e87a00"/></svg>
<div class="t" style="left:212px;top:1059px;font-size:11.8px;color:#111;font-weight:400;font-family:'Liberation Sans',sans-serif;letter-spacing:-0.137px;-webkit-text-stroke:0.2px #111;">Vista generale</div>
<div class="a" style="left:305px;top:1055px;width:113px;height:20px;background:#fff;"></div>
<svg class="a" style="left:308px;top:1057px;" width="16" height="16" viewBox="0 0 16 16"><rect x="0.5" y="0.5" width="14" height="14" fill="#f4f8ff" stroke="#3a8ae8"/><rect x="1" y="1" width="13" height="6.5" fill="#1a9af8"/><text x="7.5" y="7" font-size="7" font-family="Liberation Sans" font-weight="700" fill="#fff" text-anchor="middle">VB</text><path d="M4 9v4.5M11 9v4.5" stroke="#0a0a40" stroke-width="1.5"/><rect x="6.2" y="9.2" width="2.6" height="4.1" fill="none" stroke="#0a0a40" stroke-width="1.3"/><path d="M0.5 14.5h14v-14" stroke="#1a5ab8" fill="none"/></svg>
<div class="t" style="left:328px;top:1059px;font-size:12.2px;color:#111;font-weight:400;font-family:'Liberation Sans',sans-serif;letter-spacing:0.084px;-webkit-text-stroke:0.2px #111;">2 Script</div>
<svg class="a" style="left:409px;top:1067px;" width="8" height="5" viewBox="0 0 8 5"><path d="M0 4.5h7L3.5 0.5z" fill="#111"/></svg>
<div class="a" style="left:421px;top:1055px;width:113px;height:20px;background:#c8c8c8;"></div>
<svg class="a" style="left:423px;top:1057px;" width="16" height="16" viewBox="0 0 16 16"><defs><linearGradient id="pg" x1="0" y1="0" x2="1" y2="1"><stop offset="0" stop-color="#fff"/><stop offset="1" stop-color="#8c9fe0"/></linearGradient></defs><rect x="1.5" y="2.5" width="13" height="12" fill="url(#pg)" stroke="#3a3f66"/></svg>
<div class="t" style="left:444px;top:1059px;font-size:12.2px;color:#111;font-weight:400;font-family:'Liberation Sans',sans-serif;letter-spacing:-0.391px;-webkit-text-stroke:0.2px #111;">2 Pagine</div>
<svg class="a" style="left:525px;top:1066px;" width="8" height="5" viewBox="0 0 8 5"><path d="M0 4.5h7.5L3.75 0.5z" fill="#111"/></svg>
<div class="a" style="left:537px;top:1055px;width:113px;height:20px;background:#c8c8c8;"></div>
<svg class="a" style="left:540px;top:1056px;" width="16" height="16" viewBox="0 0 16 16"><defs><linearGradient id="sc2" x1="0" y1="0" x2="1" y2="1"><stop offset="0" stop-color="#fff"/><stop offset="1" stop-color="#c8d0f0"/></linearGradient></defs><rect x="1" y="0.5" width="13" height="14" fill="url(#sc2)"/><rect x="1" y="0.3" width="13" height="2.6" fill="#3a5ae8"/><rect x="1" y="13.6" width="13" height="1.2" fill="#2a3ad0"/><text x="7.5" y="12.4" font-size="10.5" font-weight="700" font-family="Liberation Sans" fill="#1a1a3a" text-anchor="middle">5</text></svg>
<div class="t" style="left:560px;top:1059px;font-size:12.2px;color:#111;font-weight:400;font-family:'Liberation Sans',sans-serif;letter-spacing:-0.305px;-webkit-text-stroke:0.2px #111;">Schedulazione</div>
<div class="a" style="left:1573px;top:1053px;width:20px;height:20px;background:#c8c8c8;"></div>
<svg class="a" style="left:1575px;top:1055px;" width="16" height="16" viewBox="0 0 16 16"><path d="M1 2h7M1 5h7M1 8h7" stroke="#1a1a3a" stroke-width="1.6"/><path d="M10 3v6M8 7l2 3 2-3" stroke="#1a1a3a" stroke-width="1.4" fill="none"/><rect x="1" y="11" width="14" height="4" fill="#1a1a3a"/><rect x="6" y="12" width="8" height="2" fill="#fff"/></svg>
<div class="a" style="left:1598px;top:1052px;width:1px;height:26px;background:#3a3a3a;"></div>
<svg class="a" style="left:1601px;top:1058px;" width="17" height="17" viewBox="0 0 17 17"><circle cx="8.5" cy="8.5" r="8" fill="#1a1ae8"/><path d="M4.5 8.5l3 3 5.5-6" stroke="#fff" stroke-width="2.2" fill="none"/></svg>
<div class="t" style="left:1622px;top:1061px;font-size:11.8px;color:#fff;font-weight:400;font-family:'Liberation Sans',sans-serif;letter-spacing:-0.173px;-webkit-text-stroke:0.2px #fff;">Il progetto Castagner spartisemi VBS R2...</div>
<svg class="a" style="left:1909px;top:1055px;" width="19" height="19" viewBox="0 0 19 19"><rect x="0.5" y="0.5" width="18" height="13" fill="#2a9a4a" stroke="#c8c8c8"/><rect x="3" y="2" width="13" height="9" fill="#6ae8a0"/><rect x="2" y="15" width="16" height="3" fill="#c8c8c8"/></svg>
</body></html>
